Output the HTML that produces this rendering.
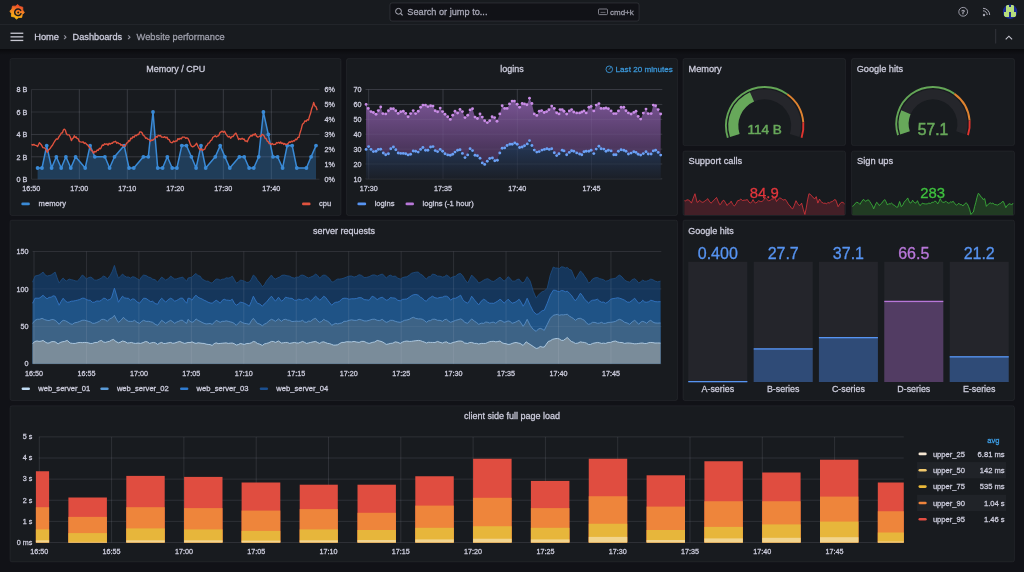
<!DOCTYPE html>
<html><head><meta charset="utf-8"><title>Website performance</title>
<style>
html,body{margin:0;padding:0;background:#111217;width:1024px;height:572px;overflow:hidden}
svg{display:block;font-family:"Liberation Sans", sans-serif;will-change:transform}
</style></head><body>
<svg width="1024" height="572" viewBox="0 0 1024 572">
<rect width="1024" height="572" fill="#111217"/>
<rect x="0" y="0" width="1024" height="49" fill="#181b1f"/>
<line x1="0" y1="24.5" x2="1024" y2="24.5" stroke="rgba(204,204,220,0.06)" stroke-width="1"/>
<defs><linearGradient id="lg" x1="0" y1="1" x2="0.3" y2="0"><stop offset="0" stop-color="#fcc60d"/><stop offset="0.45" stop-color="#f7991f"/><stop offset="1" stop-color="#f0502a"/></linearGradient></defs>
<path d="M17.83,4.54 L19.89,6.60 L22.75,7.18 L22.75,10.10 L24.36,12.53 L22.30,14.59 L21.72,17.45 L18.80,17.45 L16.37,19.06 L14.31,17.00 L11.45,16.42 L11.45,13.50 L9.84,11.07 L11.90,9.01 L12.48,6.15 L15.40,6.15 Z" fill="url(#lg)" stroke="url(#lg)" stroke-width="0.8" stroke-linejoin="round"/>
<path d="M20.70,10.41 A3.3,3.3 0 1 0 20.99,13.69" stroke="#181b1f" stroke-width="1.5" fill="none" stroke-linecap="round"/>
<circle cx="18.20" cy="12.50" r="1.0" fill="#181b1f"/>
<rect x="390" y="3" width="249" height="18" rx="2" fill="#111217" stroke="rgba(204,204,220,0.12)" stroke-width="1"/>
<circle cx="398.5" cy="11.3" r="2.9" fill="none" stroke="#b0b0bc" stroke-width="1"/>
<line x1="400.6" y1="13.4" x2="402.6" y2="15.4" stroke="#b0b0bc" stroke-width="1.1"/>
<text x="407.30" y="15.20" font-size="9.2" fill="rgba(204,204,220,0.72)" stroke="rgba(204,204,220,0.72)" stroke-width="0.28" text-anchor="start" font-weight="normal" >Search or jump to...</text>
<rect x="598.5" y="9" width="9" height="5.6" rx="1" fill="none" stroke="#9a9aa6" stroke-width="0.8"/>
<line x1="600.5" y1="12.4" x2="605.5" y2="12.4" stroke="#9a9aa6" stroke-width="0.6"/>
<text x="610.00" y="14.60" font-size="8" fill="rgba(204,204,220,0.65)" stroke="rgba(204,204,220,0.65)" stroke-width="0.28" text-anchor="start" font-weight="normal" >cmd+k</text>
<circle cx="963.2" cy="11.8" r="4.4" fill="none" stroke="#a8a8b4" stroke-width="0.9"/>
<text x="963.20" y="14.20" font-size="6" fill="#a8a8b4" stroke="#a8a8b4" stroke-width="0.28" text-anchor="middle" font-weight="bold" >?</text>
<circle cx="984" cy="15" r="1.2" fill="#a8a8b4"/>
<path d="M983,10.8 A4.2,4.2 0 0 1 987.2,15 M983,8.3 A6.7,6.7 0 0 1 989.7,15" stroke="#a8a8b4" stroke-width="1" fill="none"/>
<circle cx="1010.1" cy="11.7" r="7.2" fill="#1b2a94"/>
<clipPath id="avc"><circle cx="1010.1" cy="11.7" r="7.2"/></clipPath>
<g clip-path="url(#avc)"><rect x="1006.42" y="5.00" width="2.65" height="2.5" fill="#b5dc7c" shape-rendering="crispEdges"/><rect x="1011.33" y="5.00" width="2.65" height="2.5" fill="#b5dc7c" shape-rendering="crispEdges"/><rect x="1006.42" y="7.27" width="2.65" height="2.5" fill="#b5dc7c" shape-rendering="crispEdges"/><rect x="1008.88" y="7.27" width="2.65" height="2.5" fill="#b5dc7c" shape-rendering="crispEdges"/><rect x="1011.33" y="7.27" width="2.65" height="2.5" fill="#b5dc7c" shape-rendering="crispEdges"/><rect x="1006.42" y="9.54" width="2.65" height="2.5" fill="#b5dc7c" shape-rendering="crispEdges"/><rect x="1008.88" y="9.54" width="2.65" height="2.5" fill="#b5dc7c" shape-rendering="crispEdges"/><rect x="1011.33" y="9.54" width="2.65" height="2.5" fill="#b5dc7c" shape-rendering="crispEdges"/><rect x="1003.98" y="11.81" width="2.65" height="2.5" fill="#b5dc7c" shape-rendering="crispEdges"/><rect x="1006.42" y="11.81" width="2.65" height="2.5" fill="#b5dc7c" shape-rendering="crispEdges"/><rect x="1011.33" y="11.81" width="2.65" height="2.5" fill="#b5dc7c" shape-rendering="crispEdges"/><rect x="1013.77" y="11.81" width="2.65" height="2.5" fill="#b5dc7c" shape-rendering="crispEdges"/><rect x="1003.98" y="14.08" width="2.65" height="2.5" fill="#b5dc7c" shape-rendering="crispEdges"/><rect x="1006.42" y="14.08" width="2.65" height="2.5" fill="#b5dc7c" shape-rendering="crispEdges"/><rect x="1011.33" y="14.08" width="2.65" height="2.5" fill="#b5dc7c" shape-rendering="crispEdges"/><rect x="1013.77" y="14.08" width="2.65" height="2.5" fill="#b5dc7c" shape-rendering="crispEdges"/></g>
<rect x="10.5" y="32.60" width="12.8" height="1.3" fill="#c8c8d2"/>
<rect x="10.5" y="36.20" width="12.8" height="1.3" fill="#c8c8d2"/>
<rect x="10.5" y="39.80" width="12.8" height="1.3" fill="#c8c8d2"/>
<text x="34.20" y="40.00" font-size="9.3" fill="#ccccdc" stroke="#ccccdc" stroke-width="0.28" text-anchor="start" font-weight="normal" >Home</text>
<text x="63.60" y="40.00" font-size="9.6" fill="rgba(204,204,220,0.65)" stroke="rgba(204,204,220,0.65)" stroke-width="0.28" text-anchor="start" font-weight="normal" >›</text>
<text x="72.60" y="40.00" font-size="9.2" fill="#ccccdc" stroke="#ccccdc" stroke-width="0.28" text-anchor="start" font-weight="normal" >Dashboards</text>
<text x="127.60" y="40.00" font-size="9.6" fill="rgba(204,204,220,0.65)" stroke="rgba(204,204,220,0.65)" stroke-width="0.28" text-anchor="start" font-weight="normal" >›</text>
<text x="136.60" y="40.00" font-size="9.3" fill="rgba(204,204,220,0.65)" stroke="rgba(204,204,220,0.65)" stroke-width="0.28" text-anchor="start" font-weight="normal" >Website performance</text>
<line x1="995.7" y1="29" x2="995.7" y2="43.5" stroke="rgba(204,204,220,0.15)" stroke-width="1"/>
<path d="M1005.7,39.3 L1008.9,36.2 L1012.1,39.3" stroke="#c8c8d2" stroke-width="1.1" fill="none"/>
<defs><linearGradient id="sh" x1="0" y1="0" x2="0" y2="1"><stop offset="0" stop-color="#000" stop-opacity="0.45"/><stop offset="1" stop-color="#000" stop-opacity="0"/></linearGradient></defs>
<rect x="0" y="49" width="1024" height="6" fill="url(#sh)"/>
<rect x="10.00" y="58.50" width="331.00" height="157.00" rx="2" fill="#181b1f" stroke="rgba(204,204,220,0.06)" stroke-width="1"/>
<text x="175.70" y="71.70" font-size="9" fill="#ccccdc" stroke="#ccccdc" stroke-width="0.28" text-anchor="middle" font-weight="normal" >Memory / CPU</text>
<line x1="31.5" y1="89.60" x2="319.5" y2="89.60" stroke="rgba(204,204,220,0.12)" stroke-width="1"/>
<text x="27.30" y="92.30" font-size="7.2" fill="#ccccdc" stroke="#ccccdc" stroke-width="0.28" text-anchor="end" font-weight="normal" >8 B</text>
<line x1="31.5" y1="112.00" x2="319.5" y2="112.00" stroke="rgba(204,204,220,0.12)" stroke-width="1"/>
<text x="27.30" y="114.70" font-size="7.2" fill="#ccccdc" stroke="#ccccdc" stroke-width="0.28" text-anchor="end" font-weight="normal" >6 B</text>
<line x1="31.5" y1="134.40" x2="319.5" y2="134.40" stroke="rgba(204,204,220,0.12)" stroke-width="1"/>
<text x="27.30" y="137.10" font-size="7.2" fill="#ccccdc" stroke="#ccccdc" stroke-width="0.28" text-anchor="end" font-weight="normal" >4 B</text>
<line x1="31.5" y1="156.80" x2="319.5" y2="156.80" stroke="rgba(204,204,220,0.12)" stroke-width="1"/>
<text x="27.30" y="159.50" font-size="7.2" fill="#ccccdc" stroke="#ccccdc" stroke-width="0.28" text-anchor="end" font-weight="normal" >2 B</text>
<line x1="31.5" y1="179.20" x2="319.5" y2="179.20" stroke="rgba(204,204,220,0.12)" stroke-width="1"/>
<text x="27.30" y="181.90" font-size="7.2" fill="#ccccdc" stroke="#ccccdc" stroke-width="0.28" text-anchor="end" font-weight="normal" >0 B</text>
<text x="324.50" y="92.30" font-size="7.2" fill="#ccccdc" stroke="#ccccdc" stroke-width="0.28" text-anchor="start" font-weight="normal" >6%</text>
<text x="324.50" y="107.23" font-size="7.2" fill="#ccccdc" stroke="#ccccdc" stroke-width="0.28" text-anchor="start" font-weight="normal" >5%</text>
<text x="324.50" y="122.16" font-size="7.2" fill="#ccccdc" stroke="#ccccdc" stroke-width="0.28" text-anchor="start" font-weight="normal" >4%</text>
<text x="324.50" y="137.09" font-size="7.2" fill="#ccccdc" stroke="#ccccdc" stroke-width="0.28" text-anchor="start" font-weight="normal" >3%</text>
<text x="324.50" y="152.02" font-size="7.2" fill="#ccccdc" stroke="#ccccdc" stroke-width="0.28" text-anchor="start" font-weight="normal" >2%</text>
<text x="324.50" y="166.95" font-size="7.2" fill="#ccccdc" stroke="#ccccdc" stroke-width="0.28" text-anchor="start" font-weight="normal" >1%</text>
<text x="324.50" y="181.88" font-size="7.2" fill="#ccccdc" stroke="#ccccdc" stroke-width="0.28" text-anchor="start" font-weight="normal" >0%</text>
<text x="31.30" y="190.70" font-size="7.2" fill="#ccccdc" stroke="#ccccdc" stroke-width="0.28" text-anchor="middle" font-weight="normal" >16:50</text>
<line x1="79.30" y1="89.6" x2="79.30" y2="179.2" stroke="rgba(204,204,220,0.12)" stroke-width="1"/>
<text x="79.30" y="190.70" font-size="7.2" fill="#ccccdc" stroke="#ccccdc" stroke-width="0.28" text-anchor="middle" font-weight="normal" >17:00</text>
<line x1="127.30" y1="89.6" x2="127.30" y2="179.2" stroke="rgba(204,204,220,0.12)" stroke-width="1"/>
<text x="127.30" y="190.70" font-size="7.2" fill="#ccccdc" stroke="#ccccdc" stroke-width="0.28" text-anchor="middle" font-weight="normal" >17:10</text>
<line x1="175.30" y1="89.6" x2="175.30" y2="179.2" stroke="rgba(204,204,220,0.12)" stroke-width="1"/>
<text x="175.30" y="190.70" font-size="7.2" fill="#ccccdc" stroke="#ccccdc" stroke-width="0.28" text-anchor="middle" font-weight="normal" >17:20</text>
<line x1="223.30" y1="89.6" x2="223.30" y2="179.2" stroke="rgba(204,204,220,0.12)" stroke-width="1"/>
<text x="223.30" y="190.70" font-size="7.2" fill="#ccccdc" stroke="#ccccdc" stroke-width="0.28" text-anchor="middle" font-weight="normal" >17:30</text>
<line x1="271.30" y1="89.6" x2="271.30" y2="179.2" stroke="rgba(204,204,220,0.12)" stroke-width="1"/>
<text x="271.30" y="190.70" font-size="7.2" fill="#ccccdc" stroke="#ccccdc" stroke-width="0.28" text-anchor="middle" font-weight="normal" >17:40</text>
<line x1="31.5" y1="89.6" x2="31.5" y2="179.2" stroke="rgba(204,204,220,0.12)" stroke-width="1"/>
<path d="M37.60,168.00 L42.00,168.00 L46.70,145.60 L51.60,168.00 L56.30,156.80 L61.20,168.00 L65.90,156.80 L70.80,168.00 L75.60,156.80 L85.20,168.00 L90.10,145.60 L94.80,156.80 L104.90,156.80 L109.60,168.00 L114.50,156.80 L124.20,145.60 L129.00,168.00 L133.80,168.00 L143.40,156.80 L148.30,156.80 L153.00,112.00 L157.70,168.00 L162.60,168.00 L167.30,156.80 L172.20,168.00 L176.90,168.00 L181.80,145.60 L186.50,145.60 L191.40,156.80 L196.10,168.00 L201.00,145.60 L205.70,168.00 L215.30,156.80 L220.20,145.60 L224.90,156.80 L229.80,168.00 L239.40,156.80 L244.20,156.80 L249.10,168.00 L253.80,168.00 L258.70,156.80 L263.40,112.00 L268.30,134.40 L273.00,156.80 L277.60,156.80 L282.60,168.00 L287.20,145.60 L292.20,145.60 L296.80,168.00 L306.40,168.00 L311.10,156.80 L316.00,145.60 L316.00,179.2 L37.60,179.2 Z" fill="#2c70b2" fill-opacity="0.4"/>
<line x1="79.30" y1="89.6" x2="79.30" y2="179.2" stroke="rgba(204,204,220,0.07)" stroke-width="1"/>
<line x1="127.30" y1="89.6" x2="127.30" y2="179.2" stroke="rgba(204,204,220,0.07)" stroke-width="1"/>
<line x1="175.30" y1="89.6" x2="175.30" y2="179.2" stroke="rgba(204,204,220,0.07)" stroke-width="1"/>
<line x1="223.30" y1="89.6" x2="223.30" y2="179.2" stroke="rgba(204,204,220,0.07)" stroke-width="1"/>
<line x1="271.30" y1="89.6" x2="271.30" y2="179.2" stroke="rgba(204,204,220,0.07)" stroke-width="1"/>
<line x1="31.5" y1="134.40" x2="319.5" y2="134.40" stroke="rgba(204,204,220,0.07)" stroke-width="1"/>
<line x1="31.5" y1="156.80" x2="319.5" y2="156.80" stroke="rgba(204,204,220,0.07)" stroke-width="1"/>
<path d="M37.60,168.00 L42.00,168.00 L46.70,145.60 L51.60,168.00 L56.30,156.80 L61.20,168.00 L65.90,156.80 L70.80,168.00 L75.60,156.80 L85.20,168.00 L90.10,145.60 L94.80,156.80 L104.90,156.80 L109.60,168.00 L114.50,156.80 L124.20,145.60 L129.00,168.00 L133.80,168.00 L143.40,156.80 L148.30,156.80 L153.00,112.00 L157.70,168.00 L162.60,168.00 L167.30,156.80 L172.20,168.00 L176.90,168.00 L181.80,145.60 L186.50,145.60 L191.40,156.80 L196.10,168.00 L201.00,145.60 L205.70,168.00 L215.30,156.80 L220.20,145.60 L224.90,156.80 L229.80,168.00 L239.40,156.80 L244.20,156.80 L249.10,168.00 L253.80,168.00 L258.70,156.80 L263.40,112.00 L268.30,134.40 L273.00,156.80 L277.60,156.80 L282.60,168.00 L287.20,145.60 L292.20,145.60 L296.80,168.00 L306.40,168.00 L311.10,156.80 L316.00,145.60" fill="none" stroke="#3a8ad6" stroke-width="1.5" stroke-linejoin="round"/>
<circle cx="37.60" cy="168.00" r="1.9" fill="#3a8ad6"/>
<circle cx="42.00" cy="168.00" r="1.9" fill="#3a8ad6"/>
<circle cx="46.70" cy="145.60" r="1.9" fill="#3a8ad6"/>
<circle cx="51.60" cy="168.00" r="1.9" fill="#3a8ad6"/>
<circle cx="56.30" cy="156.80" r="1.9" fill="#3a8ad6"/>
<circle cx="61.20" cy="168.00" r="1.9" fill="#3a8ad6"/>
<circle cx="65.90" cy="156.80" r="1.9" fill="#3a8ad6"/>
<circle cx="70.80" cy="168.00" r="1.9" fill="#3a8ad6"/>
<circle cx="75.60" cy="156.80" r="1.9" fill="#3a8ad6"/>
<circle cx="85.20" cy="168.00" r="1.9" fill="#3a8ad6"/>
<circle cx="90.10" cy="145.60" r="1.9" fill="#3a8ad6"/>
<circle cx="94.80" cy="156.80" r="1.9" fill="#3a8ad6"/>
<circle cx="104.90" cy="156.80" r="1.9" fill="#3a8ad6"/>
<circle cx="109.60" cy="168.00" r="1.9" fill="#3a8ad6"/>
<circle cx="114.50" cy="156.80" r="1.9" fill="#3a8ad6"/>
<circle cx="124.20" cy="145.60" r="1.9" fill="#3a8ad6"/>
<circle cx="129.00" cy="168.00" r="1.9" fill="#3a8ad6"/>
<circle cx="133.80" cy="168.00" r="1.9" fill="#3a8ad6"/>
<circle cx="143.40" cy="156.80" r="1.9" fill="#3a8ad6"/>
<circle cx="148.30" cy="156.80" r="1.9" fill="#3a8ad6"/>
<circle cx="153.00" cy="112.00" r="1.9" fill="#3a8ad6"/>
<circle cx="157.70" cy="168.00" r="1.9" fill="#3a8ad6"/>
<circle cx="162.60" cy="168.00" r="1.9" fill="#3a8ad6"/>
<circle cx="167.30" cy="156.80" r="1.9" fill="#3a8ad6"/>
<circle cx="172.20" cy="168.00" r="1.9" fill="#3a8ad6"/>
<circle cx="176.90" cy="168.00" r="1.9" fill="#3a8ad6"/>
<circle cx="181.80" cy="145.60" r="1.9" fill="#3a8ad6"/>
<circle cx="186.50" cy="145.60" r="1.9" fill="#3a8ad6"/>
<circle cx="191.40" cy="156.80" r="1.9" fill="#3a8ad6"/>
<circle cx="196.10" cy="168.00" r="1.9" fill="#3a8ad6"/>
<circle cx="201.00" cy="145.60" r="1.9" fill="#3a8ad6"/>
<circle cx="205.70" cy="168.00" r="1.9" fill="#3a8ad6"/>
<circle cx="215.30" cy="156.80" r="1.9" fill="#3a8ad6"/>
<circle cx="220.20" cy="145.60" r="1.9" fill="#3a8ad6"/>
<circle cx="224.90" cy="156.80" r="1.9" fill="#3a8ad6"/>
<circle cx="229.80" cy="168.00" r="1.9" fill="#3a8ad6"/>
<circle cx="239.40" cy="156.80" r="1.9" fill="#3a8ad6"/>
<circle cx="244.20" cy="156.80" r="1.9" fill="#3a8ad6"/>
<circle cx="249.10" cy="168.00" r="1.9" fill="#3a8ad6"/>
<circle cx="253.80" cy="168.00" r="1.9" fill="#3a8ad6"/>
<circle cx="258.70" cy="156.80" r="1.9" fill="#3a8ad6"/>
<circle cx="263.40" cy="112.00" r="1.9" fill="#3a8ad6"/>
<circle cx="268.30" cy="134.40" r="1.9" fill="#3a8ad6"/>
<circle cx="273.00" cy="156.80" r="1.9" fill="#3a8ad6"/>
<circle cx="277.60" cy="156.80" r="1.9" fill="#3a8ad6"/>
<circle cx="282.60" cy="168.00" r="1.9" fill="#3a8ad6"/>
<circle cx="287.20" cy="145.60" r="1.9" fill="#3a8ad6"/>
<circle cx="292.20" cy="145.60" r="1.9" fill="#3a8ad6"/>
<circle cx="296.80" cy="168.00" r="1.9" fill="#3a8ad6"/>
<circle cx="306.40" cy="168.00" r="1.9" fill="#3a8ad6"/>
<circle cx="311.10" cy="156.80" r="1.9" fill="#3a8ad6"/>
<circle cx="316.00" cy="145.60" r="1.9" fill="#3a8ad6"/>
<path d="M31.50,144.40 L32.67,145.09 L33.83,144.36 L35.00,145.30 L36.30,145.40 L37.60,146.50 L39.40,142.70 L41.10,144.40 L42.90,147.60 L44.60,147.90 L45.90,149.42 L47.20,152.30 L48.55,149.85 L49.90,148.80 L51.20,146.80 L52.50,145.30 L53.80,142.74 L55.10,140.60 L56.40,139.03 L57.70,139.20 L59.00,136.59 L60.30,134.80 L61.33,132.99 L62.35,132.95 L63.38,129.95 L64.40,129.10 L65.37,130.13 L66.33,133.48 L67.30,134.80 L69.10,134.80 L70.25,136.99 L71.40,140.60 L72.37,138.65 L73.33,138.04 L74.30,135.70 L75.20,137.46 L76.10,136.81 L77.00,138.30 L78.13,138.67 L79.27,141.37 L80.40,141.80 L81.75,142.05 L83.10,141.80 L84.27,143.47 L85.43,142.86 L86.60,144.40 L87.77,145.13 L88.93,146.96 L90.10,147.90 L91.27,150.56 L92.43,150.86 L93.60,153.20 L94.77,151.36 L95.93,151.97 L97.10,150.00 L98.27,150.37 L99.43,148.26 L100.60,148.80 L102.30,145.00 L103.47,145.32 L104.63,143.76 L105.80,144.40 L106.90,143.77 L108.00,145.20 L109.10,143.27 L110.20,144.10 L111.28,143.25 L112.35,143.26 L113.42,142.00 L114.50,141.80 L115.60,141.28 L116.70,143.25 L117.80,142.45 L118.90,143.60 L119.96,143.68 L121.02,145.25 L122.08,144.65 L123.14,146.16 L124.20,146.20 L125.37,145.70 L126.53,143.20 L127.70,142.70 L128.74,140.56 L129.78,141.01 L130.82,138.10 L131.86,138.71 L132.90,136.60 L134.07,137.29 L135.23,135.26 L136.40,135.70 L137.50,134.42 L138.60,134.69 L139.70,131.88 L140.80,131.90 L142.10,132.88 L143.40,135.70 L144.50,135.92 L145.60,138.22 L146.70,137.96 L147.80,139.20 L149.10,139.38 L150.40,141.30 L151.57,139.94 L152.73,140.33 L153.90,139.20 L154.97,138.48 L156.05,136.37 L157.12,137.27 L158.20,135.30 L159.30,136.02 L160.40,135.36 L161.50,137.18 L162.60,137.10 L163.70,137.42 L164.80,136.66 L165.90,137.92 L167.00,137.10 L168.10,139.40 L169.20,139.66 L170.30,141.99 L171.40,142.70 L172.47,142.49 L173.55,141.03 L174.62,141.81 L175.70,140.90 L176.80,141.15 L177.90,138.62 L179.00,139.55 L180.10,138.30 L181.23,138.90 L182.37,137.05 L183.50,137.10 L184.60,137.14 L185.70,138.38 L186.80,137.77 L187.90,138.30 L189.07,140.58 L190.23,144.09 L191.40,146.20 L192.70,146.89 L194.00,146.20 L195.30,145.02 L196.60,143.20 L197.90,146.23 L199.20,148.80 L200.30,149.92 L201.40,148.80 L202.50,150.44 L203.60,149.70 L204.77,149.15 L205.93,146.26 L207.10,145.30 L208.27,143.17 L209.43,142.78 L210.60,140.60 L211.77,139.98 L212.93,137.26 L214.10,136.60 L215.27,135.75 L216.43,136.90 L217.60,136.00 L218.77,135.59 L219.93,132.66 L221.10,131.90 L222.27,131.16 L223.43,132.28 L224.60,131.30 L225.90,133.89 L227.20,135.70 L228.37,137.01 L229.53,136.45 L230.70,138.30 L231.87,136.52 L233.03,136.61 L234.20,134.80 L235.90,133.10 L237.25,136.09 L238.60,139.50 L239.77,138.57 L240.93,139.36 L242.10,138.30 L243.14,139.22 L244.18,139.01 L245.22,141.11 L246.26,140.85 L247.30,141.80 L248.60,138.50 L249.90,136.60 L250.96,135.43 L252.02,136.14 L253.08,134.32 L254.14,134.97 L255.20,133.60 L256.50,136.14 L257.80,137.10 L258.84,136.86 L259.88,135.93 L260.92,136.46 L261.96,134.29 L263.00,134.80 L264.03,135.87 L265.07,138.30 L266.10,138.53 L267.13,141.12 L268.17,141.64 L269.20,143.60 L270.24,143.31 L271.28,144.42 L272.32,143.40 L273.36,144.68 L274.40,144.40 L275.50,144.38 L276.60,142.53 L277.70,143.05 L278.80,142.30 L279.78,143.22 L280.75,142.04 L281.73,143.54 L282.70,142.97 L283.68,144.46 L284.65,143.48 L285.62,144.49 L286.60,144.40 L287.95,143.65 L289.30,141.80 L290.34,142.40 L291.38,141.20 L292.42,141.78 L293.46,140.69 L294.50,141.00 L295.60,139.23 L296.70,139.75 L297.80,137.42 L298.90,137.40 L300.07,132.70 L301.23,129.14 L302.40,124.30 L303.70,123.27 L305.00,120.80 L306.17,121.44 L307.33,119.71 L308.50,120.00 L309.54,116.12 L310.58,113.30 L311.62,108.88 L312.66,106.35 L313.70,102.50 L314.87,105.95 L316.03,106.83 L317.20,110.30" fill="none" stroke="#e0523e" stroke-width="1.35" stroke-linejoin="round"/>
<rect x="21.3" y="202.6" width="8.6" height="2.6" rx="1.3" fill="#3a8ad6"/>
<text x="38.60" y="206.00" font-size="7.6" fill="#ccccdc" stroke="#ccccdc" stroke-width="0.28" text-anchor="start" font-weight="normal" >memory</text>
<rect x="302" y="202.6" width="8.6" height="2.6" rx="1.3" fill="#e0523e"/>
<text x="318.90" y="206.00" font-size="7.6" fill="#ccccdc" stroke="#ccccdc" stroke-width="0.28" text-anchor="start" font-weight="normal" >cpu</text>
<rect x="346.50" y="58.50" width="331.00" height="157.00" rx="2" fill="#181b1f" stroke="rgba(204,204,220,0.06)" stroke-width="1"/>
<text x="512.00" y="71.70" font-size="9" fill="#ccccdc" stroke="#ccccdc" stroke-width="0.28" text-anchor="middle" font-weight="normal" >logins</text>
<circle cx="609.3" cy="69.3" r="3.3" fill="none" stroke="#3a96d8" stroke-width="0.9"/>
<path d="M609.1,69.4 L610.9,67.4" stroke="#3a96d8" stroke-width="0.9" fill="none" stroke-linecap="round"/>
<text x="615.60" y="71.60" font-size="8.1" fill="#3a96d8" stroke="#3a96d8" stroke-width="0.28" text-anchor="start" font-weight="normal" >Last 20 minutes</text>
<line x1="365.5" y1="89.50" x2="662.3" y2="89.50" stroke="rgba(204,204,220,0.12)" stroke-width="1"/>
<text x="361.50" y="92.20" font-size="7.2" fill="#ccccdc" stroke="#ccccdc" stroke-width="0.28" text-anchor="end" font-weight="normal" >70</text>
<line x1="365.5" y1="104.40" x2="662.3" y2="104.40" stroke="rgba(204,204,220,0.12)" stroke-width="1"/>
<text x="361.50" y="107.10" font-size="7.2" fill="#ccccdc" stroke="#ccccdc" stroke-width="0.28" text-anchor="end" font-weight="normal" >60</text>
<line x1="365.5" y1="119.30" x2="662.3" y2="119.30" stroke="rgba(204,204,220,0.12)" stroke-width="1"/>
<text x="361.50" y="122.00" font-size="7.2" fill="#ccccdc" stroke="#ccccdc" stroke-width="0.28" text-anchor="end" font-weight="normal" >50</text>
<line x1="365.5" y1="134.20" x2="662.3" y2="134.20" stroke="rgba(204,204,220,0.12)" stroke-width="1"/>
<text x="361.50" y="136.90" font-size="7.2" fill="#ccccdc" stroke="#ccccdc" stroke-width="0.28" text-anchor="end" font-weight="normal" >40</text>
<line x1="365.5" y1="149.10" x2="662.3" y2="149.10" stroke="rgba(204,204,220,0.12)" stroke-width="1"/>
<text x="361.50" y="151.80" font-size="7.2" fill="#ccccdc" stroke="#ccccdc" stroke-width="0.28" text-anchor="end" font-weight="normal" >30</text>
<line x1="365.5" y1="164.00" x2="662.3" y2="164.00" stroke="rgba(204,204,220,0.12)" stroke-width="1"/>
<text x="361.50" y="166.70" font-size="7.2" fill="#ccccdc" stroke="#ccccdc" stroke-width="0.28" text-anchor="end" font-weight="normal" >20</text>
<line x1="365.5" y1="178.90" x2="662.3" y2="178.90" stroke="rgba(204,204,220,0.12)" stroke-width="1"/>
<text x="361.50" y="181.60" font-size="7.2" fill="#ccccdc" stroke="#ccccdc" stroke-width="0.28" text-anchor="end" font-weight="normal" >10</text>
<line x1="368.70" y1="89.5" x2="368.70" y2="178.9" stroke="rgba(204,204,220,0.12)" stroke-width="1"/>
<text x="368.70" y="190.70" font-size="7.2" fill="#ccccdc" stroke="#ccccdc" stroke-width="0.28" text-anchor="middle" font-weight="normal" >17:30</text>
<line x1="443.00" y1="89.5" x2="443.00" y2="178.9" stroke="rgba(204,204,220,0.12)" stroke-width="1"/>
<text x="443.00" y="190.70" font-size="7.2" fill="#ccccdc" stroke="#ccccdc" stroke-width="0.28" text-anchor="middle" font-weight="normal" >17:35</text>
<line x1="517.30" y1="89.5" x2="517.30" y2="178.9" stroke="rgba(204,204,220,0.12)" stroke-width="1"/>
<text x="517.30" y="190.70" font-size="7.2" fill="#ccccdc" stroke="#ccccdc" stroke-width="0.28" text-anchor="middle" font-weight="normal" >17:40</text>
<line x1="591.60" y1="89.5" x2="591.60" y2="178.9" stroke="rgba(204,204,220,0.12)" stroke-width="1"/>
<text x="591.60" y="190.70" font-size="7.2" fill="#ccccdc" stroke="#ccccdc" stroke-width="0.28" text-anchor="middle" font-weight="normal" >17:45</text>
<defs><linearGradient id="pg" gradientUnits="userSpaceOnUse" x1="0" y1="98" x2="0" y2="165"><stop offset="0" stop-color="#7a5595"/><stop offset="1" stop-color="#3d2c4b"/></linearGradient><linearGradient id="bg2" gradientUnits="userSpaceOnUse" x1="0" y1="142" x2="0" y2="179"><stop offset="0" stop-color="#25395a"/><stop offset="1" stop-color="#1b1f27"/></linearGradient></defs>
<path d="M366.10,104.40 L368.30,108.40 L371.00,111.60 L373.40,112.50 L376.00,114.30 L378.30,110.60 L380.70,107.00 L382.90,113.60 L385.70,113.90 L388.40,110.80 L390.80,108.80 L393.40,108.80 L395.80,110.80 L398.20,113.40 L400.70,111.70 L403.30,111.20 L405.70,113.40 L408.10,116.70 L410.60,113.60 L413.20,110.60 L415.60,113.60 L418.20,111.20 L420.60,107.20 L422.90,105.10 L425.50,105.10 L427.90,106.60 L430.60,105.70 L433.00,106.10 L435.20,110.80 L437.60,111.70 L440.20,108.10 L442.60,111.60 L445.00,114.30 L447.70,116.70 L450.30,119.40 L452.70,115.20 L455.00,111.20 L457.60,113.00 L460.00,109.40 L462.40,111.60 L465.00,117.60 L467.70,115.20 L470.10,109.90 L472.50,108.80 L475.00,117.10 L477.40,118.50 L480.00,113.90 L482.30,117.10 L484.70,120.70 L487.30,122.60 L489.70,120.70 L492.10,116.70 L494.60,117.60 L497.00,121.30 L499.80,113.90 L502.20,105.70 L504.70,108.40 L507.10,108.40 L509.50,103.90 L512.10,101.10 L514.40,101.10 L517.20,104.20 L519.60,107.20 L522.20,103.50 L524.50,103.90 L526.90,104.80 L529.50,98.30 L531.90,103.50 L534.30,113.90 L536.80,115.40 L539.20,111.20 L541.60,110.60 L544.20,112.50 L546.60,111.60 L548.90,109.70 L551.70,106.10 L554.30,108.40 L556.70,112.70 L559.00,113.90 L560.00,109.60 L562.20,109.60 L564.00,111.30 L566.70,114.00 L569.30,110.90 L571.60,109.60 L573.80,112.00 L576.70,112.90 L579.60,112.90 L581.80,112.00 L584.00,110.90 L586.20,112.90 L588.90,107.30 L591.10,106.40 L593.80,110.90 L596.20,105.10 L598.90,103.60 L601.10,108.40 L603.80,108.40 L606.00,108.00 L608.40,108.70 L611.10,110.90 L613.80,113.60 L616.00,113.60 L618.40,110.90 L621.10,107.30 L623.80,107.30 L626.00,110.70 L628.40,112.90 L631.10,114.00 L633.80,112.40 L636.00,111.30 L638.20,116.40 L640.70,119.10 L643.30,113.10 L646.00,109.10 L648.20,113.60 L651.10,113.60 L653.30,105.10 L655.60,105.80 L658.20,109.60 L660.70,114.00 L660.70,155.10 L658.20,152.40 L655.60,150.20 L653.30,150.90 L651.10,154.00 L648.20,154.00 L646.00,151.80 L643.30,153.60 L640.70,155.10 L638.20,154.20 L636.00,152.40 L633.80,151.80 L631.10,153.10 L628.40,154.00 L626.00,151.30 L623.80,150.20 L621.10,149.80 L618.40,151.30 L616.00,154.70 L613.80,154.70 L611.10,150.90 L608.40,150.20 L606.00,151.30 L603.80,149.10 L601.10,148.70 L598.90,146.20 L596.20,149.10 L593.80,153.60 L591.10,150.20 L588.90,151.30 L586.20,151.30 L584.00,151.80 L581.80,154.70 L579.60,154.00 L576.70,152.90 L573.80,151.30 L571.60,150.70 L569.30,152.40 L566.70,154.70 L564.00,150.90 L562.20,150.20 L559.00,153.80 L556.70,155.60 L554.30,152.80 L551.70,148.80 L549.30,149.40 L546.90,148.80 L544.40,149.40 L542.00,150.10 L539.20,151.60 L536.80,152.10 L534.30,150.10 L531.90,145.50 L529.50,140.60 L527.30,143.90 L524.50,145.70 L522.20,147.00 L519.60,147.50 L517.20,144.20 L514.80,142.90 L512.20,144.20 L509.90,144.20 L507.10,145.50 L504.70,147.90 L502.20,148.30 L499.80,153.00 L497.40,160.20 L494.80,160.70 L492.40,158.00 L489.70,158.50 L487.30,161.30 L484.70,164.40 L482.30,162.90 L480.00,158.30 L477.40,155.80 L475.00,155.20 L472.50,150.60 L470.10,148.80 L467.70,154.90 L465.00,157.60 L462.40,153.40 L460.00,149.70 L457.60,150.30 L455.00,152.10 L452.70,154.30 L450.30,155.20 L447.70,154.90 L445.00,153.80 L442.60,151.20 L440.20,149.40 L437.60,151.60 L435.20,150.60 L433.00,146.60 L430.60,147.00 L427.90,150.30 L425.50,150.30 L422.90,147.50 L420.60,149.40 L418.20,152.10 L415.60,151.20 L413.20,151.00 L410.60,154.30 L408.10,154.90 L405.70,153.80 L403.30,153.40 L400.70,153.40 L398.20,153.00 L395.80,149.70 L393.40,147.00 L390.80,148.80 L388.40,153.80 L385.70,154.70 L383.30,153.00 L380.70,149.20 L378.30,149.40 L376.00,151.20 L373.40,151.60 L371.00,149.40 L368.60,146.60 L366.10,149.40 Z" fill="url(#pg)"/>
<path d="M366.10,149.40 L368.60,146.60 L371.00,149.40 L373.40,151.60 L376.00,151.20 L378.30,149.40 L380.70,149.20 L383.30,153.00 L385.70,154.70 L388.40,153.80 L390.80,148.80 L393.40,147.00 L395.80,149.70 L398.20,153.00 L400.70,153.40 L403.30,153.40 L405.70,153.80 L408.10,154.90 L410.60,154.30 L413.20,151.00 L415.60,151.20 L418.20,152.10 L420.60,149.40 L422.90,147.50 L425.50,150.30 L427.90,150.30 L430.60,147.00 L433.00,146.60 L435.20,150.60 L437.60,151.60 L440.20,149.40 L442.60,151.20 L445.00,153.80 L447.70,154.90 L450.30,155.20 L452.70,154.30 L455.00,152.10 L457.60,150.30 L460.00,149.70 L462.40,153.40 L465.00,157.60 L467.70,154.90 L470.10,148.80 L472.50,150.60 L475.00,155.20 L477.40,155.80 L480.00,158.30 L482.30,162.90 L484.70,164.40 L487.30,161.30 L489.70,158.50 L492.40,158.00 L494.80,160.70 L497.40,160.20 L499.80,153.00 L502.20,148.30 L504.70,147.90 L507.10,145.50 L509.90,144.20 L512.20,144.20 L514.80,142.90 L517.20,144.20 L519.60,147.50 L522.20,147.00 L524.50,145.70 L527.30,143.90 L529.50,140.60 L531.90,145.50 L534.30,150.10 L536.80,152.10 L539.20,151.60 L542.00,150.10 L544.40,149.40 L546.90,148.80 L549.30,149.40 L551.70,148.80 L554.30,152.80 L556.70,155.60 L559.00,153.80 L562.20,150.20 L564.00,150.90 L566.70,154.70 L569.30,152.40 L571.60,150.70 L573.80,151.30 L576.70,152.90 L579.60,154.00 L581.80,154.70 L584.00,151.80 L586.20,151.30 L588.90,151.30 L591.10,150.20 L593.80,153.60 L596.20,149.10 L598.90,146.20 L601.10,148.70 L603.80,149.10 L606.00,151.30 L608.40,150.20 L611.10,150.90 L613.80,154.70 L616.00,154.70 L618.40,151.30 L621.10,149.80 L623.80,150.20 L626.00,151.30 L628.40,154.00 L631.10,153.10 L633.80,151.80 L636.00,152.40 L638.20,154.20 L640.70,155.10 L643.30,153.60 L646.00,151.80 L648.20,154.00 L651.10,154.00 L653.30,150.90 L655.60,150.20 L658.20,152.40 L660.70,155.10 L660.70,178.9 L366.10,178.9 Z" fill="url(#bg2)"/>
<line x1="365.5" y1="89.50" x2="662.3" y2="89.50" stroke="rgba(204,204,220,0.07)" stroke-width="1"/>
<line x1="365.5" y1="104.40" x2="662.3" y2="104.40" stroke="rgba(204,204,220,0.07)" stroke-width="1"/>
<line x1="365.5" y1="119.30" x2="662.3" y2="119.30" stroke="rgba(204,204,220,0.07)" stroke-width="1"/>
<line x1="365.5" y1="134.20" x2="662.3" y2="134.20" stroke="rgba(204,204,220,0.07)" stroke-width="1"/>
<line x1="365.5" y1="149.10" x2="662.3" y2="149.10" stroke="rgba(204,204,220,0.07)" stroke-width="1"/>
<line x1="365.5" y1="164.00" x2="662.3" y2="164.00" stroke="rgba(204,204,220,0.07)" stroke-width="1"/>
<line x1="365.5" y1="178.90" x2="662.3" y2="178.90" stroke="rgba(204,204,220,0.07)" stroke-width="1"/>
<line x1="368.70" y1="89.5" x2="368.70" y2="178.9" stroke="rgba(204,204,220,0.07)" stroke-width="1"/>
<line x1="443.00" y1="89.5" x2="443.00" y2="178.9" stroke="rgba(204,204,220,0.07)" stroke-width="1"/>
<line x1="517.30" y1="89.5" x2="517.30" y2="178.9" stroke="rgba(204,204,220,0.07)" stroke-width="1"/>
<line x1="591.60" y1="89.5" x2="591.60" y2="178.9" stroke="rgba(204,204,220,0.07)" stroke-width="1"/>
<circle cx="366.10" cy="104.40" r="1.45" fill="#c98ce6"/>
<circle cx="368.30" cy="108.40" r="1.45" fill="#c98ce6"/>
<circle cx="371.00" cy="111.60" r="1.45" fill="#c98ce6"/>
<circle cx="373.40" cy="112.50" r="1.45" fill="#c98ce6"/>
<circle cx="376.00" cy="114.30" r="1.45" fill="#c98ce6"/>
<circle cx="378.30" cy="110.60" r="1.45" fill="#c98ce6"/>
<circle cx="380.70" cy="107.00" r="1.45" fill="#c98ce6"/>
<circle cx="382.90" cy="113.60" r="1.45" fill="#c98ce6"/>
<circle cx="385.70" cy="113.90" r="1.45" fill="#c98ce6"/>
<circle cx="388.40" cy="110.80" r="1.45" fill="#c98ce6"/>
<circle cx="390.80" cy="108.80" r="1.45" fill="#c98ce6"/>
<circle cx="393.40" cy="108.80" r="1.45" fill="#c98ce6"/>
<circle cx="395.80" cy="110.80" r="1.45" fill="#c98ce6"/>
<circle cx="398.20" cy="113.40" r="1.45" fill="#c98ce6"/>
<circle cx="400.70" cy="111.70" r="1.45" fill="#c98ce6"/>
<circle cx="403.30" cy="111.20" r="1.45" fill="#c98ce6"/>
<circle cx="405.70" cy="113.40" r="1.45" fill="#c98ce6"/>
<circle cx="408.10" cy="116.70" r="1.45" fill="#c98ce6"/>
<circle cx="410.60" cy="113.60" r="1.45" fill="#c98ce6"/>
<circle cx="413.20" cy="110.60" r="1.45" fill="#c98ce6"/>
<circle cx="415.60" cy="113.60" r="1.45" fill="#c98ce6"/>
<circle cx="418.20" cy="111.20" r="1.45" fill="#c98ce6"/>
<circle cx="420.60" cy="107.20" r="1.45" fill="#c98ce6"/>
<circle cx="422.90" cy="105.10" r="1.45" fill="#c98ce6"/>
<circle cx="425.50" cy="105.10" r="1.45" fill="#c98ce6"/>
<circle cx="427.90" cy="106.60" r="1.45" fill="#c98ce6"/>
<circle cx="430.60" cy="105.70" r="1.45" fill="#c98ce6"/>
<circle cx="433.00" cy="106.10" r="1.45" fill="#c98ce6"/>
<circle cx="435.20" cy="110.80" r="1.45" fill="#c98ce6"/>
<circle cx="437.60" cy="111.70" r="1.45" fill="#c98ce6"/>
<circle cx="440.20" cy="108.10" r="1.45" fill="#c98ce6"/>
<circle cx="442.60" cy="111.60" r="1.45" fill="#c98ce6"/>
<circle cx="445.00" cy="114.30" r="1.45" fill="#c98ce6"/>
<circle cx="447.70" cy="116.70" r="1.45" fill="#c98ce6"/>
<circle cx="450.30" cy="119.40" r="1.45" fill="#c98ce6"/>
<circle cx="452.70" cy="115.20" r="1.45" fill="#c98ce6"/>
<circle cx="455.00" cy="111.20" r="1.45" fill="#c98ce6"/>
<circle cx="457.60" cy="113.00" r="1.45" fill="#c98ce6"/>
<circle cx="460.00" cy="109.40" r="1.45" fill="#c98ce6"/>
<circle cx="462.40" cy="111.60" r="1.45" fill="#c98ce6"/>
<circle cx="465.00" cy="117.60" r="1.45" fill="#c98ce6"/>
<circle cx="467.70" cy="115.20" r="1.45" fill="#c98ce6"/>
<circle cx="470.10" cy="109.90" r="1.45" fill="#c98ce6"/>
<circle cx="472.50" cy="108.80" r="1.45" fill="#c98ce6"/>
<circle cx="475.00" cy="117.10" r="1.45" fill="#c98ce6"/>
<circle cx="477.40" cy="118.50" r="1.45" fill="#c98ce6"/>
<circle cx="480.00" cy="113.90" r="1.45" fill="#c98ce6"/>
<circle cx="482.30" cy="117.10" r="1.45" fill="#c98ce6"/>
<circle cx="484.70" cy="120.70" r="1.45" fill="#c98ce6"/>
<circle cx="487.30" cy="122.60" r="1.45" fill="#c98ce6"/>
<circle cx="489.70" cy="120.70" r="1.45" fill="#c98ce6"/>
<circle cx="492.10" cy="116.70" r="1.45" fill="#c98ce6"/>
<circle cx="494.60" cy="117.60" r="1.45" fill="#c98ce6"/>
<circle cx="497.00" cy="121.30" r="1.45" fill="#c98ce6"/>
<circle cx="499.80" cy="113.90" r="1.45" fill="#c98ce6"/>
<circle cx="502.20" cy="105.70" r="1.45" fill="#c98ce6"/>
<circle cx="504.70" cy="108.40" r="1.45" fill="#c98ce6"/>
<circle cx="507.10" cy="108.40" r="1.45" fill="#c98ce6"/>
<circle cx="509.50" cy="103.90" r="1.45" fill="#c98ce6"/>
<circle cx="512.10" cy="101.10" r="1.45" fill="#c98ce6"/>
<circle cx="514.40" cy="101.10" r="1.45" fill="#c98ce6"/>
<circle cx="517.20" cy="104.20" r="1.45" fill="#c98ce6"/>
<circle cx="519.60" cy="107.20" r="1.45" fill="#c98ce6"/>
<circle cx="522.20" cy="103.50" r="1.45" fill="#c98ce6"/>
<circle cx="524.50" cy="103.90" r="1.45" fill="#c98ce6"/>
<circle cx="526.90" cy="104.80" r="1.45" fill="#c98ce6"/>
<circle cx="529.50" cy="98.30" r="1.45" fill="#c98ce6"/>
<circle cx="531.90" cy="103.50" r="1.45" fill="#c98ce6"/>
<circle cx="534.30" cy="113.90" r="1.45" fill="#c98ce6"/>
<circle cx="536.80" cy="115.40" r="1.45" fill="#c98ce6"/>
<circle cx="539.20" cy="111.20" r="1.45" fill="#c98ce6"/>
<circle cx="541.60" cy="110.60" r="1.45" fill="#c98ce6"/>
<circle cx="544.20" cy="112.50" r="1.45" fill="#c98ce6"/>
<circle cx="546.60" cy="111.60" r="1.45" fill="#c98ce6"/>
<circle cx="548.90" cy="109.70" r="1.45" fill="#c98ce6"/>
<circle cx="551.70" cy="106.10" r="1.45" fill="#c98ce6"/>
<circle cx="554.30" cy="108.40" r="1.45" fill="#c98ce6"/>
<circle cx="556.70" cy="112.70" r="1.45" fill="#c98ce6"/>
<circle cx="559.00" cy="113.90" r="1.45" fill="#c98ce6"/>
<circle cx="560.00" cy="109.60" r="1.45" fill="#c98ce6"/>
<circle cx="562.20" cy="109.60" r="1.45" fill="#c98ce6"/>
<circle cx="564.00" cy="111.30" r="1.45" fill="#c98ce6"/>
<circle cx="566.70" cy="114.00" r="1.45" fill="#c98ce6"/>
<circle cx="569.30" cy="110.90" r="1.45" fill="#c98ce6"/>
<circle cx="571.60" cy="109.60" r="1.45" fill="#c98ce6"/>
<circle cx="573.80" cy="112.00" r="1.45" fill="#c98ce6"/>
<circle cx="576.70" cy="112.90" r="1.45" fill="#c98ce6"/>
<circle cx="579.60" cy="112.90" r="1.45" fill="#c98ce6"/>
<circle cx="581.80" cy="112.00" r="1.45" fill="#c98ce6"/>
<circle cx="584.00" cy="110.90" r="1.45" fill="#c98ce6"/>
<circle cx="586.20" cy="112.90" r="1.45" fill="#c98ce6"/>
<circle cx="588.90" cy="107.30" r="1.45" fill="#c98ce6"/>
<circle cx="591.10" cy="106.40" r="1.45" fill="#c98ce6"/>
<circle cx="593.80" cy="110.90" r="1.45" fill="#c98ce6"/>
<circle cx="596.20" cy="105.10" r="1.45" fill="#c98ce6"/>
<circle cx="598.90" cy="103.60" r="1.45" fill="#c98ce6"/>
<circle cx="601.10" cy="108.40" r="1.45" fill="#c98ce6"/>
<circle cx="603.80" cy="108.40" r="1.45" fill="#c98ce6"/>
<circle cx="606.00" cy="108.00" r="1.45" fill="#c98ce6"/>
<circle cx="608.40" cy="108.70" r="1.45" fill="#c98ce6"/>
<circle cx="611.10" cy="110.90" r="1.45" fill="#c98ce6"/>
<circle cx="613.80" cy="113.60" r="1.45" fill="#c98ce6"/>
<circle cx="616.00" cy="113.60" r="1.45" fill="#c98ce6"/>
<circle cx="618.40" cy="110.90" r="1.45" fill="#c98ce6"/>
<circle cx="621.10" cy="107.30" r="1.45" fill="#c98ce6"/>
<circle cx="623.80" cy="107.30" r="1.45" fill="#c98ce6"/>
<circle cx="626.00" cy="110.70" r="1.45" fill="#c98ce6"/>
<circle cx="628.40" cy="112.90" r="1.45" fill="#c98ce6"/>
<circle cx="631.10" cy="114.00" r="1.45" fill="#c98ce6"/>
<circle cx="633.80" cy="112.40" r="1.45" fill="#c98ce6"/>
<circle cx="636.00" cy="111.30" r="1.45" fill="#c98ce6"/>
<circle cx="638.20" cy="116.40" r="1.45" fill="#c98ce6"/>
<circle cx="640.70" cy="119.10" r="1.45" fill="#c98ce6"/>
<circle cx="643.30" cy="113.10" r="1.45" fill="#c98ce6"/>
<circle cx="646.00" cy="109.10" r="1.45" fill="#c98ce6"/>
<circle cx="648.20" cy="113.60" r="1.45" fill="#c98ce6"/>
<circle cx="651.10" cy="113.60" r="1.45" fill="#c98ce6"/>
<circle cx="653.30" cy="105.10" r="1.45" fill="#c98ce6"/>
<circle cx="655.60" cy="105.80" r="1.45" fill="#c98ce6"/>
<circle cx="658.20" cy="109.60" r="1.45" fill="#c98ce6"/>
<circle cx="660.70" cy="114.00" r="1.45" fill="#c98ce6"/>
<circle cx="366.10" cy="149.40" r="1.45" fill="#6aa0f5"/>
<circle cx="368.60" cy="146.60" r="1.45" fill="#6aa0f5"/>
<circle cx="371.00" cy="149.40" r="1.45" fill="#6aa0f5"/>
<circle cx="373.40" cy="151.60" r="1.45" fill="#6aa0f5"/>
<circle cx="376.00" cy="151.20" r="1.45" fill="#6aa0f5"/>
<circle cx="378.30" cy="149.40" r="1.45" fill="#6aa0f5"/>
<circle cx="380.70" cy="149.20" r="1.45" fill="#6aa0f5"/>
<circle cx="383.30" cy="153.00" r="1.45" fill="#6aa0f5"/>
<circle cx="385.70" cy="154.70" r="1.45" fill="#6aa0f5"/>
<circle cx="388.40" cy="153.80" r="1.45" fill="#6aa0f5"/>
<circle cx="390.80" cy="148.80" r="1.45" fill="#6aa0f5"/>
<circle cx="393.40" cy="147.00" r="1.45" fill="#6aa0f5"/>
<circle cx="395.80" cy="149.70" r="1.45" fill="#6aa0f5"/>
<circle cx="398.20" cy="153.00" r="1.45" fill="#6aa0f5"/>
<circle cx="400.70" cy="153.40" r="1.45" fill="#6aa0f5"/>
<circle cx="403.30" cy="153.40" r="1.45" fill="#6aa0f5"/>
<circle cx="405.70" cy="153.80" r="1.45" fill="#6aa0f5"/>
<circle cx="408.10" cy="154.90" r="1.45" fill="#6aa0f5"/>
<circle cx="410.60" cy="154.30" r="1.45" fill="#6aa0f5"/>
<circle cx="413.20" cy="151.00" r="1.45" fill="#6aa0f5"/>
<circle cx="415.60" cy="151.20" r="1.45" fill="#6aa0f5"/>
<circle cx="418.20" cy="152.10" r="1.45" fill="#6aa0f5"/>
<circle cx="420.60" cy="149.40" r="1.45" fill="#6aa0f5"/>
<circle cx="422.90" cy="147.50" r="1.45" fill="#6aa0f5"/>
<circle cx="425.50" cy="150.30" r="1.45" fill="#6aa0f5"/>
<circle cx="427.90" cy="150.30" r="1.45" fill="#6aa0f5"/>
<circle cx="430.60" cy="147.00" r="1.45" fill="#6aa0f5"/>
<circle cx="433.00" cy="146.60" r="1.45" fill="#6aa0f5"/>
<circle cx="435.20" cy="150.60" r="1.45" fill="#6aa0f5"/>
<circle cx="437.60" cy="151.60" r="1.45" fill="#6aa0f5"/>
<circle cx="440.20" cy="149.40" r="1.45" fill="#6aa0f5"/>
<circle cx="442.60" cy="151.20" r="1.45" fill="#6aa0f5"/>
<circle cx="445.00" cy="153.80" r="1.45" fill="#6aa0f5"/>
<circle cx="447.70" cy="154.90" r="1.45" fill="#6aa0f5"/>
<circle cx="450.30" cy="155.20" r="1.45" fill="#6aa0f5"/>
<circle cx="452.70" cy="154.30" r="1.45" fill="#6aa0f5"/>
<circle cx="455.00" cy="152.10" r="1.45" fill="#6aa0f5"/>
<circle cx="457.60" cy="150.30" r="1.45" fill="#6aa0f5"/>
<circle cx="460.00" cy="149.70" r="1.45" fill="#6aa0f5"/>
<circle cx="462.40" cy="153.40" r="1.45" fill="#6aa0f5"/>
<circle cx="465.00" cy="157.60" r="1.45" fill="#6aa0f5"/>
<circle cx="467.70" cy="154.90" r="1.45" fill="#6aa0f5"/>
<circle cx="470.10" cy="148.80" r="1.45" fill="#6aa0f5"/>
<circle cx="472.50" cy="150.60" r="1.45" fill="#6aa0f5"/>
<circle cx="475.00" cy="155.20" r="1.45" fill="#6aa0f5"/>
<circle cx="477.40" cy="155.80" r="1.45" fill="#6aa0f5"/>
<circle cx="480.00" cy="158.30" r="1.45" fill="#6aa0f5"/>
<circle cx="482.30" cy="162.90" r="1.45" fill="#6aa0f5"/>
<circle cx="484.70" cy="164.40" r="1.45" fill="#6aa0f5"/>
<circle cx="487.30" cy="161.30" r="1.45" fill="#6aa0f5"/>
<circle cx="489.70" cy="158.50" r="1.45" fill="#6aa0f5"/>
<circle cx="492.40" cy="158.00" r="1.45" fill="#6aa0f5"/>
<circle cx="494.80" cy="160.70" r="1.45" fill="#6aa0f5"/>
<circle cx="497.40" cy="160.20" r="1.45" fill="#6aa0f5"/>
<circle cx="499.80" cy="153.00" r="1.45" fill="#6aa0f5"/>
<circle cx="502.20" cy="148.30" r="1.45" fill="#6aa0f5"/>
<circle cx="504.70" cy="147.90" r="1.45" fill="#6aa0f5"/>
<circle cx="507.10" cy="145.50" r="1.45" fill="#6aa0f5"/>
<circle cx="509.90" cy="144.20" r="1.45" fill="#6aa0f5"/>
<circle cx="512.20" cy="144.20" r="1.45" fill="#6aa0f5"/>
<circle cx="514.80" cy="142.90" r="1.45" fill="#6aa0f5"/>
<circle cx="517.20" cy="144.20" r="1.45" fill="#6aa0f5"/>
<circle cx="519.60" cy="147.50" r="1.45" fill="#6aa0f5"/>
<circle cx="522.20" cy="147.00" r="1.45" fill="#6aa0f5"/>
<circle cx="524.50" cy="145.70" r="1.45" fill="#6aa0f5"/>
<circle cx="527.30" cy="143.90" r="1.45" fill="#6aa0f5"/>
<circle cx="529.50" cy="140.60" r="1.45" fill="#6aa0f5"/>
<circle cx="531.90" cy="145.50" r="1.45" fill="#6aa0f5"/>
<circle cx="534.30" cy="150.10" r="1.45" fill="#6aa0f5"/>
<circle cx="536.80" cy="152.10" r="1.45" fill="#6aa0f5"/>
<circle cx="539.20" cy="151.60" r="1.45" fill="#6aa0f5"/>
<circle cx="542.00" cy="150.10" r="1.45" fill="#6aa0f5"/>
<circle cx="544.40" cy="149.40" r="1.45" fill="#6aa0f5"/>
<circle cx="546.90" cy="148.80" r="1.45" fill="#6aa0f5"/>
<circle cx="549.30" cy="149.40" r="1.45" fill="#6aa0f5"/>
<circle cx="551.70" cy="148.80" r="1.45" fill="#6aa0f5"/>
<circle cx="554.30" cy="152.80" r="1.45" fill="#6aa0f5"/>
<circle cx="556.70" cy="155.60" r="1.45" fill="#6aa0f5"/>
<circle cx="559.00" cy="153.80" r="1.45" fill="#6aa0f5"/>
<circle cx="562.20" cy="150.20" r="1.45" fill="#6aa0f5"/>
<circle cx="564.00" cy="150.90" r="1.45" fill="#6aa0f5"/>
<circle cx="566.70" cy="154.70" r="1.45" fill="#6aa0f5"/>
<circle cx="569.30" cy="152.40" r="1.45" fill="#6aa0f5"/>
<circle cx="571.60" cy="150.70" r="1.45" fill="#6aa0f5"/>
<circle cx="573.80" cy="151.30" r="1.45" fill="#6aa0f5"/>
<circle cx="576.70" cy="152.90" r="1.45" fill="#6aa0f5"/>
<circle cx="579.60" cy="154.00" r="1.45" fill="#6aa0f5"/>
<circle cx="581.80" cy="154.70" r="1.45" fill="#6aa0f5"/>
<circle cx="584.00" cy="151.80" r="1.45" fill="#6aa0f5"/>
<circle cx="586.20" cy="151.30" r="1.45" fill="#6aa0f5"/>
<circle cx="588.90" cy="151.30" r="1.45" fill="#6aa0f5"/>
<circle cx="591.10" cy="150.20" r="1.45" fill="#6aa0f5"/>
<circle cx="593.80" cy="153.60" r="1.45" fill="#6aa0f5"/>
<circle cx="596.20" cy="149.10" r="1.45" fill="#6aa0f5"/>
<circle cx="598.90" cy="146.20" r="1.45" fill="#6aa0f5"/>
<circle cx="601.10" cy="148.70" r="1.45" fill="#6aa0f5"/>
<circle cx="603.80" cy="149.10" r="1.45" fill="#6aa0f5"/>
<circle cx="606.00" cy="151.30" r="1.45" fill="#6aa0f5"/>
<circle cx="608.40" cy="150.20" r="1.45" fill="#6aa0f5"/>
<circle cx="611.10" cy="150.90" r="1.45" fill="#6aa0f5"/>
<circle cx="613.80" cy="154.70" r="1.45" fill="#6aa0f5"/>
<circle cx="616.00" cy="154.70" r="1.45" fill="#6aa0f5"/>
<circle cx="618.40" cy="151.30" r="1.45" fill="#6aa0f5"/>
<circle cx="621.10" cy="149.80" r="1.45" fill="#6aa0f5"/>
<circle cx="623.80" cy="150.20" r="1.45" fill="#6aa0f5"/>
<circle cx="626.00" cy="151.30" r="1.45" fill="#6aa0f5"/>
<circle cx="628.40" cy="154.00" r="1.45" fill="#6aa0f5"/>
<circle cx="631.10" cy="153.10" r="1.45" fill="#6aa0f5"/>
<circle cx="633.80" cy="151.80" r="1.45" fill="#6aa0f5"/>
<circle cx="636.00" cy="152.40" r="1.45" fill="#6aa0f5"/>
<circle cx="638.20" cy="154.20" r="1.45" fill="#6aa0f5"/>
<circle cx="640.70" cy="155.10" r="1.45" fill="#6aa0f5"/>
<circle cx="643.30" cy="153.60" r="1.45" fill="#6aa0f5"/>
<circle cx="646.00" cy="151.80" r="1.45" fill="#6aa0f5"/>
<circle cx="648.20" cy="154.00" r="1.45" fill="#6aa0f5"/>
<circle cx="651.10" cy="154.00" r="1.45" fill="#6aa0f5"/>
<circle cx="653.30" cy="150.90" r="1.45" fill="#6aa0f5"/>
<circle cx="655.60" cy="150.20" r="1.45" fill="#6aa0f5"/>
<circle cx="658.20" cy="152.40" r="1.45" fill="#6aa0f5"/>
<circle cx="660.70" cy="155.10" r="1.45" fill="#6aa0f5"/>
<rect x="357.4" y="202.6" width="8.8" height="2.6" rx="1.3" fill="#5794f2"/>
<text x="374.70" y="205.90" font-size="7.6" fill="#ccccdc" stroke="#ccccdc" stroke-width="0.28" text-anchor="start" font-weight="normal" >logins</text>
<rect x="405.5" y="202.6" width="8.5" height="2.6" rx="1.3" fill="#b877d9"/>
<text x="422.60" y="205.90" font-size="7.6" fill="#ccccdc" stroke="#ccccdc" stroke-width="0.28" text-anchor="start" font-weight="normal" >logins (-1 hour)</text>
<rect x="683.00" y="58.50" width="162.50" height="87.10" rx="2" fill="#181b1f" stroke="rgba(204,204,220,0.06)" stroke-width="1"/>
<text x="688.50" y="72.00" font-size="9.2" fill="#ccccdc" stroke="#ccccdc" stroke-width="0.28" text-anchor="start" font-weight="normal" >Memory</text>
<path d="M729.99,137.03 A36.5,36.5 0 1 1 799.41,137.03 L789.81,133.91 A26.4,26.4 0 1 0 739.59,133.91 Z" fill="#25262b"/>
<path d="M729.99,137.03 A36.5,36.5 0 0 1 749.99,92.34 L754.06,101.59 A26.4,26.4 0 0 0 739.59,133.91 Z" fill="#67a85a"/>
<path d="M726.94,138.02 A39.7,39.7 0 0 1 787.83,93.49 L786.73,95.03 A37.800000000000004,37.800000000000004 0 0 0 728.75,137.43 Z" fill="#64a657"/>
<path d="M787.83,93.49 A39.7,39.7 0 0 1 804.24,122.21 L802.35,122.38 A37.800000000000004,37.800000000000004 0 0 0 786.73,95.03 Z" fill="#df8330"/>
<path d="M804.24,122.21 A39.7,39.7 0 0 1 802.46,138.02 L800.65,137.43 A37.800000000000004,37.800000000000004 0 0 0 802.35,122.38 Z" fill="#e0342f"/>
<text x="764.70" y="134.00" font-size="13.5" fill="#67a85a" stroke="#67a85a" stroke-width="0.55" text-anchor="middle" font-weight="normal" >114 B</text>
<rect x="851.50" y="58.50" width="163.00" height="87.10" rx="2" fill="#181b1f" stroke="rgba(204,204,220,0.06)" stroke-width="1"/>
<text x="856.70" y="72.00" font-size="9.2" fill="#ccccdc" stroke="#ccccdc" stroke-width="0.28" text-anchor="start" font-weight="normal" >Google hits</text>
<path d="M900.19,134.41 A34.5,34.5 0 1 1 965.81,134.41 L956.21,131.29 A24.4,24.4 0 1 0 909.79,131.29 Z" fill="#25262b"/>
<path d="M900.19,134.41 A34.5,34.5 0 0 1 901.25,110.25 L910.55,114.20 A24.4,24.4 0 0 0 909.79,131.29 Z" fill="#67a85a"/>
<path d="M897.15,135.40 A37.7,37.7 0 0 1 954.97,93.11 L953.86,94.66 A35.800000000000004,35.800000000000004 0 0 0 898.95,134.81 Z" fill="#64a657"/>
<path d="M954.97,93.11 A37.7,37.7 0 0 1 970.55,120.39 L968.66,120.56 A35.800000000000004,35.800000000000004 0 0 0 953.86,94.66 Z" fill="#df8330"/>
<path d="M970.55,120.39 A37.7,37.7 0 0 1 968.85,135.40 L967.05,134.81 A35.800000000000004,35.800000000000004 0 0 0 968.66,120.56 Z" fill="#e0342f"/>
<text x="933.00" y="134.80" font-size="15.6" fill="#67a85a" stroke="#67a85a" stroke-width="0.55" text-anchor="middle" font-weight="normal" >57.1</text>
<rect x="683.00" y="151.00" width="162.50" height="64.50" rx="2" fill="#181b1f" stroke="rgba(204,204,220,0.06)" stroke-width="1"/>
<text x="688.50" y="164.20" font-size="9.3" fill="#ccccdc" stroke="#ccccdc" stroke-width="0.28" text-anchor="start" font-weight="normal" >Support calls</text>
<path d="M684.45,200.68 L685.69,200.83 L686.93,199.85 L688.17,199.87 L689.79,200.84 L691.42,203.11 L693.20,198.18 L694.98,193.71 L697.09,202.30 L698.30,201.82 L699.52,200.20 L701.14,201.69 L702.76,202.30 L703.98,201.72 L705.19,200.68 L706.41,200.17 L707.63,198.58 L709.25,201.05 L710.87,203.11 L712.08,202.39 L713.30,200.68 L714.92,199.29 L716.54,197.44 L718.16,201.33 L719.78,204.74 L721.13,203.71 L722.48,200.93 L723.84,200.20 L725.46,202.60 L727.08,205.55 L728.43,203.75 L729.78,203.26 L731.13,201.17 L732.75,204.46 L734.37,206.03 L735.99,203.95 L737.61,200.68 L739.24,200.34 L740.86,199.06 L742.48,200.51 L744.10,200.20 L745.72,200.09 L747.34,199.55 L748.96,202.13 L750.58,203.11 L751.80,201.72 L753.01,199.55 L754.23,201.62 L755.45,203.11 L757.07,202.16 L758.69,200.68 L760.31,201.49 L761.93,201.49 L763.55,200.23 L765.17,197.44 L766.79,199.37 L768.41,200.68 L770.03,200.47 L771.66,199.06 L773.28,198.89 L774.90,197.44 L776.52,201.49 L778.14,199.26 L779.76,197.93 L781.38,198.49 L783.00,200.20 L784.22,199.65 L785.43,199.55 L787.06,201.92 L788.68,204.74 L790.03,205.76 L791.38,208.11 L792.73,208.79 L794.35,205.22 L795.97,200.68 L797.59,203.52 L799.21,205.55 L800.43,204.93 L801.64,203.11 L803.27,209.29 L804.89,214.46 L806.24,207.94 L807.59,199.88 L808.94,193.71 L810.56,194.49 L812.18,196.63 L813.40,197.49 L814.61,199.06 L816.23,196.63 L817.85,203.11 L819.48,199.06 L820.69,201.28 L821.91,202.30 L823.53,203.27 L825.15,203.11 L826.50,203.92 L827.85,202.41 L829.20,203.11 L830.82,201.92 L832.44,201.49 L834.06,199.80 L835.69,199.87 L836.90,203.01 L838.12,206.68 L839.74,204.01 L841.36,202.30 L842.98,202.39 L844.60,203.92 L844.60,215.1 L684.45,215.1 Z" fill="rgba(224,47,68,0.22)"/>
<path d="M684.45,200.68 L685.69,200.83 L686.93,199.85 L688.17,199.87 L689.79,200.84 L691.42,203.11 L693.20,198.18 L694.98,193.71 L697.09,202.30 L698.30,201.82 L699.52,200.20 L701.14,201.69 L702.76,202.30 L703.98,201.72 L705.19,200.68 L706.41,200.17 L707.63,198.58 L709.25,201.05 L710.87,203.11 L712.08,202.39 L713.30,200.68 L714.92,199.29 L716.54,197.44 L718.16,201.33 L719.78,204.74 L721.13,203.71 L722.48,200.93 L723.84,200.20 L725.46,202.60 L727.08,205.55 L728.43,203.75 L729.78,203.26 L731.13,201.17 L732.75,204.46 L734.37,206.03 L735.99,203.95 L737.61,200.68 L739.24,200.34 L740.86,199.06 L742.48,200.51 L744.10,200.20 L745.72,200.09 L747.34,199.55 L748.96,202.13 L750.58,203.11 L751.80,201.72 L753.01,199.55 L754.23,201.62 L755.45,203.11 L757.07,202.16 L758.69,200.68 L760.31,201.49 L761.93,201.49 L763.55,200.23 L765.17,197.44 L766.79,199.37 L768.41,200.68 L770.03,200.47 L771.66,199.06 L773.28,198.89 L774.90,197.44 L776.52,201.49 L778.14,199.26 L779.76,197.93 L781.38,198.49 L783.00,200.20 L784.22,199.65 L785.43,199.55 L787.06,201.92 L788.68,204.74 L790.03,205.76 L791.38,208.11 L792.73,208.79 L794.35,205.22 L795.97,200.68 L797.59,203.52 L799.21,205.55 L800.43,204.93 L801.64,203.11 L803.27,209.29 L804.89,214.46 L806.24,207.94 L807.59,199.88 L808.94,193.71 L810.56,194.49 L812.18,196.63 L813.40,197.49 L814.61,199.06 L816.23,196.63 L817.85,203.11 L819.48,199.06 L820.69,201.28 L821.91,202.30 L823.53,203.27 L825.15,203.11 L826.50,203.92 L827.85,202.41 L829.20,203.11 L830.82,201.92 L832.44,201.49 L834.06,199.80 L835.69,199.87 L836.90,203.01 L838.12,206.68 L839.74,204.01 L841.36,202.30 L842.98,202.39 L844.60,203.92" fill="none" stroke="#e3363c" stroke-width="0.85" stroke-opacity="0.9" stroke-linejoin="round"/>
<text x="764.30" y="198.20" font-size="14.9" fill="#e3363c" stroke="#e3363c" stroke-width="0.3" text-anchor="middle" font-weight="normal" >84.9</text>
<rect x="851.50" y="151.00" width="163.00" height="64.50" rx="2" fill="#181b1f" stroke="rgba(204,204,220,0.06)" stroke-width="1"/>
<text x="857.00" y="164.20" font-size="9.3" fill="#ccccdc" stroke="#ccccdc" stroke-width="0.28" text-anchor="start" font-weight="normal" >Sign ups</text>
<path d="M852.30,206.36 L853.76,205.42 L855.21,203.37 L856.67,202.30 L858.29,202.71 L859.92,204.41 L861.54,201.75 L863.16,199.55 L864.37,199.95 L865.59,201.49 L867.05,200.24 L868.51,199.87 L869.88,201.68 L871.26,203.92 L872.48,205.81 L873.69,208.79 L875.15,205.34 L876.61,202.30 L877.99,203.43 L879.37,205.55 L880.58,204.10 L881.80,203.11 L883.26,201.09 L884.72,199.55 L886.09,201.82 L887.47,205.06 L888.82,203.64 L890.17,204.03 L891.53,203.11 L893.15,204.67 L894.77,205.55 L896.23,206.99 L897.69,207.17 L899.63,201.49 L901.25,206.68 L902.87,204.95 L904.49,201.49 L906.11,200.31 L907.74,197.93 L908.95,200.99 L910.17,203.11 L911.38,202.54 L912.60,200.20 L913.81,201.87 L915.03,203.11 L916.25,202.70 L917.46,200.68 L918.68,203.50 L919.89,205.55 L921.11,204.61 L922.32,203.11 L923.95,203.78 L925.57,203.92 L927.19,203.92 L928.81,203.11 L930.43,203.48 L932.05,202.30 L933.40,202.34 L934.75,201.16 L936.10,201.49 L937.72,203.92 L938.94,201.89 L940.16,198.58 L941.37,200.89 L942.59,202.30 L944.21,202.31 L945.83,201.17 L947.04,202.37 L948.26,203.11 L949.48,202.85 L950.69,201.81 L951.91,202.33 L953.12,201.17 L954.74,203.60 L956.37,205.06 L957.58,204.49 L958.80,203.11 L960.15,204.69 L961.50,204.55 L962.85,206.03 L964.47,204.02 L966.09,202.79 L967.31,203.82 L968.52,206.36 L969.74,209.73 L970.95,214.46 L972.17,212.89 L973.39,212.03 L974.60,206.57 L975.82,202.30 L977.03,197.29 L978.25,193.39 L979.46,194.20 L980.68,196.63 L981.90,197.38 L983.11,199.55 L984.73,198.58 L986.35,206.36 L987.57,204.75 L988.79,203.92 L990.14,202.77 L991.49,203.65 L992.84,203.11 L994.46,204.41 L996.08,204.74 L997.70,205.06 L999.32,203.92 L1000.67,203.40 L1002.02,201.77 L1003.37,201.49 L1004.59,204.36 L1005.81,207.65 L1007.43,205.13 L1009.05,203.92 L1010.26,203.76 L1011.48,205.06 L1013.10,203.11 L1013.10,215.1 L852.30,215.1 Z" fill="rgba(55,135,45,0.30)"/>
<path d="M852.30,206.36 L853.76,205.42 L855.21,203.37 L856.67,202.30 L858.29,202.71 L859.92,204.41 L861.54,201.75 L863.16,199.55 L864.37,199.95 L865.59,201.49 L867.05,200.24 L868.51,199.87 L869.88,201.68 L871.26,203.92 L872.48,205.81 L873.69,208.79 L875.15,205.34 L876.61,202.30 L877.99,203.43 L879.37,205.55 L880.58,204.10 L881.80,203.11 L883.26,201.09 L884.72,199.55 L886.09,201.82 L887.47,205.06 L888.82,203.64 L890.17,204.03 L891.53,203.11 L893.15,204.67 L894.77,205.55 L896.23,206.99 L897.69,207.17 L899.63,201.49 L901.25,206.68 L902.87,204.95 L904.49,201.49 L906.11,200.31 L907.74,197.93 L908.95,200.99 L910.17,203.11 L911.38,202.54 L912.60,200.20 L913.81,201.87 L915.03,203.11 L916.25,202.70 L917.46,200.68 L918.68,203.50 L919.89,205.55 L921.11,204.61 L922.32,203.11 L923.95,203.78 L925.57,203.92 L927.19,203.92 L928.81,203.11 L930.43,203.48 L932.05,202.30 L933.40,202.34 L934.75,201.16 L936.10,201.49 L937.72,203.92 L938.94,201.89 L940.16,198.58 L941.37,200.89 L942.59,202.30 L944.21,202.31 L945.83,201.17 L947.04,202.37 L948.26,203.11 L949.48,202.85 L950.69,201.81 L951.91,202.33 L953.12,201.17 L954.74,203.60 L956.37,205.06 L957.58,204.49 L958.80,203.11 L960.15,204.69 L961.50,204.55 L962.85,206.03 L964.47,204.02 L966.09,202.79 L967.31,203.82 L968.52,206.36 L969.74,209.73 L970.95,214.46 L972.17,212.89 L973.39,212.03 L974.60,206.57 L975.82,202.30 L977.03,197.29 L978.25,193.39 L979.46,194.20 L980.68,196.63 L981.90,197.38 L983.11,199.55 L984.73,198.58 L986.35,206.36 L987.57,204.75 L988.79,203.92 L990.14,202.77 L991.49,203.65 L992.84,203.11 L994.46,204.41 L996.08,204.74 L997.70,205.06 L999.32,203.92 L1000.67,203.40 L1002.02,201.77 L1003.37,201.49 L1004.59,204.36 L1005.81,207.65 L1007.43,205.13 L1009.05,203.92 L1010.26,203.76 L1011.48,205.06 L1013.10,203.11" fill="none" stroke="#3ec13e" stroke-width="0.85" stroke-opacity="0.9" stroke-linejoin="round"/>
<text x="932.70" y="198.20" font-size="14.9" fill="#3ec13e" stroke="#3ec13e" stroke-width="0.3" text-anchor="middle" font-weight="normal" >283</text>
<rect x="10.00" y="220.10" width="667.50" height="180.40" rx="2" fill="#181b1f" stroke="rgba(204,204,220,0.06)" stroke-width="1"/>
<text x="344.00" y="234.00" font-size="9" fill="#ccccdc" stroke="#ccccdc" stroke-width="0.28" text-anchor="middle" font-weight="normal" >server requests</text>
<line x1="32.6" y1="251.50" x2="661.3" y2="251.50" stroke="rgba(204,204,220,0.12)" stroke-width="1"/>
<text x="28.50" y="254.20" font-size="7.2" fill="#ccccdc" stroke="#ccccdc" stroke-width="0.28" text-anchor="end" font-weight="normal" >150</text>
<line x1="32.6" y1="288.93" x2="661.3" y2="288.93" stroke="rgba(204,204,220,0.12)" stroke-width="1"/>
<text x="28.50" y="291.63" font-size="7.2" fill="#ccccdc" stroke="#ccccdc" stroke-width="0.28" text-anchor="end" font-weight="normal" >100</text>
<line x1="32.6" y1="326.36" x2="661.3" y2="326.36" stroke="rgba(204,204,220,0.12)" stroke-width="1"/>
<text x="28.50" y="329.06" font-size="7.2" fill="#ccccdc" stroke="#ccccdc" stroke-width="0.28" text-anchor="end" font-weight="normal" >50</text>
<line x1="32.6" y1="363.79" x2="661.3" y2="363.79" stroke="rgba(204,204,220,0.12)" stroke-width="1"/>
<text x="28.50" y="366.49" font-size="7.2" fill="#ccccdc" stroke="#ccccdc" stroke-width="0.28" text-anchor="end" font-weight="normal" >0</text>
<path d="M32.60,282.14 L35.03,276.11 L37.04,275.52 L39.05,275.10 L41.06,273.70 L43.07,272.09 L45.08,274.86 L47.09,276.11 L49.10,275.54 L51.11,275.10 L53.12,273.61 L55.13,272.09 L57.14,277.77 L59.15,283.14 L61.16,280.06 L63.17,278.12 L66.18,281.13 L69.20,279.12 L71.21,279.64 L73.22,280.13 L75.23,280.86 L77.24,281.13 L79.75,278.64 L82.26,275.10 L84.27,276.38 L86.28,279.12 L88.29,277.76 L90.30,277.11 L92.31,277.88 L94.32,280.13 L96.83,280.18 L99.35,279.12 L101.36,277.96 L103.37,276.11 L105.38,276.79 L107.39,279.12 L110.40,275.10 L112.41,271.14 L114.42,265.45 L116.43,272.62 L118.44,278.12 L120.45,276.38 L122.46,274.10 L124.47,275.81 L126.48,277.11 L128.49,277.00 L130.50,278.12 L132.51,276.74 L134.52,277.11 L137.04,278.67 L139.55,280.13 L141.56,276.82 L143.57,275.10 L146.08,275.55 L148.59,277.11 L150.60,277.65 L152.61,279.12 L155.13,279.78 L157.64,282.14 L159.65,279.56 L161.66,277.11 L163.67,278.51 L165.68,280.13 L168.19,278.73 L170.70,276.11 L172.71,277.65 L174.72,279.12 L176.73,278.87 L178.74,278.12 L180.75,277.61 L182.76,277.11 L184.77,279.41 L186.78,281.13 L188.02,278.12 L190.03,277.54 L192.04,277.11 L194.05,274.90 L196.06,273.49 L198.07,275.69 L200.08,276.11 L202.09,279.01 L204.10,280.13 L206.11,281.24 L208.12,281.13 L210.13,282.51 L212.14,283.14 L214.15,280.80 L216.16,279.12 L218.17,279.14 L220.18,280.13 L222.19,279.24 L224.20,279.12 L226.21,277.84 L228.22,278.12 L230.23,277.59 L232.24,276.11 L234.25,279.44 L236.26,283.14 L238.27,282.26 L240.28,280.13 L242.29,280.42 L244.30,281.13 L246.81,282.46 L249.32,282.14 L251.33,279.24 L253.34,275.10 L255.35,276.71 L257.36,280.13 L259.87,282.92 L262.39,286.76 L264.40,284.68 L266.41,281.13 L268.92,278.06 L271.43,275.10 L273.44,277.98 L275.45,279.12 L277.46,277.93 L279.47,277.11 L281.98,275.34 L284.50,275.10 L287.01,275.84 L289.52,276.11 L292.04,277.61 L294.55,278.12 L296.56,277.20 L298.57,277.11 L300.58,275.36 L302.59,275.10 L304.60,275.80 L306.61,277.11 L308.62,277.95 L310.63,277.11 L313.14,276.07 L315.65,274.10 L317.66,275.42 L319.67,278.12 L321.68,276.15 L323.69,275.10 L325.70,275.39 L327.71,277.11 L329.72,278.83 L331.73,282.14 L333.74,281.67 L335.75,280.13 L337.76,279.04 L339.77,279.12 L341.90,278.72 L344.02,278.12 L346.53,277.02 L349.05,276.11 L351.56,276.05 L354.07,277.11 L356.58,276.32 L359.10,274.70 L361.61,275.44 L364.12,277.51 L366.63,277.37 L369.15,276.71 L372.16,275.10 L374.67,274.91 L377.19,276.11 L379.70,274.96 L382.21,274.10 L384.22,275.59 L386.23,278.12 L388.24,276.19 L390.25,275.10 L392.76,276.45 L395.28,276.11 L397.79,278.16 L400.30,279.12 L402.31,277.76 L404.32,277.11 L406.83,276.80 L409.35,275.10 L411.36,273.37 L413.37,272.69 L415.88,272.20 L418.39,272.09 L420.40,274.23 L422.41,275.10 L424.42,277.37 L426.43,279.12 L428.44,276.73 L430.45,276.65 L432.46,274.10 L434.97,274.58 L437.49,276.11 L440.00,276.17 L442.51,277.11 L444.52,276.60 L446.53,275.10 L448.54,276.30 L450.55,278.12 L453.07,276.74 L455.58,276.11 L458.09,274.03 L460.60,273.49 L462.61,275.57 L464.62,279.12 L467.64,283.14 L469.65,279.27 L471.66,275.10 L474.67,278.12 L476.68,280.17 L478.69,283.14 L481.21,281.82 L483.72,280.13 L485.73,279.19 L487.74,278.72 L489.75,279.84 L491.76,281.13 L493.77,281.45 L495.78,280.13 L497.90,278.59 L500.03,277.11 L502.04,279.25 L504.05,281.13 L506.06,279.58 L508.07,276.71 L510.08,278.35 L512.09,281.13 L515.10,281.13 L517.11,279.50 L519.12,279.12 L521.13,281.87 L523.14,283.14 L525.15,280.50 L527.16,276.71 L530.18,281.13 L533.19,291.18 L536.21,298.22 L538.22,295.25 L540.23,293.19 L542.24,291.63 L544.25,291.18 L547.26,288.17 L550.28,275.10 L553.29,267.06 L555.30,267.99 L557.31,268.07 L559.32,268.52 L561.33,266.85 L563.34,267.06 L565.35,268.07 L567.36,267.46 L569.37,269.46 L571.38,270.08 L573.39,274.99 L575.40,279.52 L577.91,275.16 L580.43,271.08 L582.44,272.88 L584.45,276.11 L586.46,278.79 L588.47,283.14 L590.48,281.96 L592.49,279.12 L595.00,277.85 L597.51,277.51 L599.52,278.68 L601.53,279.12 L603.54,279.69 L605.55,281.13 L608.07,280.71 L610.58,279.12 L613.09,278.79 L615.60,278.12 L617.61,276.24 L619.62,275.10 L622.14,277.03 L624.65,280.13 L627.16,281.53 L629.67,282.14 L632.19,279.65 L634.70,278.72 L636.71,280.44 L638.72,283.14 L640.73,281.74 L642.74,280.13 L644.75,281.26 L646.76,281.13 L648.77,280.33 L650.78,279.12 L652.89,279.73 L655.00,281.13 L657.75,281.88 L660.50,281.13 L660.50,363.8 L32.60,363.8 Z" fill="#15365b"/>
<path d="M32.60,303.24 L35.03,298.22 L37.04,298.17 L39.05,298.22 L41.06,296.99 L43.07,295.20 L45.08,297.31 L47.09,298.82 L49.10,297.37 L51.11,297.21 L53.12,295.83 L55.13,296.21 L57.14,300.50 L59.15,305.25 L61.16,301.33 L63.17,298.22 L65.18,300.78 L67.19,302.24 L69.20,302.08 L71.21,301.23 L73.22,301.08 L75.23,300.67 L77.24,300.23 L79.75,299.51 L82.26,298.22 L84.27,298.25 L86.28,299.45 L88.29,300.23 L90.30,300.29 L92.31,302.30 L94.32,302.24 L96.83,300.94 L99.35,301.23 L101.36,300.30 L103.37,298.22 L105.38,298.46 L107.39,300.23 L109.40,299.56 L111.41,298.22 L114.42,288.17 L116.43,294.91 L118.44,302.24 L120.45,299.05 L122.46,296.21 L124.47,297.83 L126.48,298.22 L128.49,298.35 L130.50,300.23 L132.51,298.93 L134.52,299.22 L137.04,301.98 L139.55,303.24 L141.56,300.74 L143.57,298.22 L146.08,298.48 L148.59,300.23 L150.60,301.61 L152.61,301.23 L155.13,303.54 L157.64,304.25 L159.65,300.53 L161.66,298.22 L163.67,300.09 L165.68,302.24 L168.19,299.57 L170.70,298.22 L172.71,299.39 L174.72,301.23 L176.73,300.44 L178.74,299.22 L180.75,298.11 L182.76,298.22 L184.77,301.08 L186.78,303.24 L188.02,298.22 L190.03,298.41 L192.04,300.23 L194.05,297.12 L196.06,295.20 L198.07,297.28 L200.08,298.22 L202.09,299.04 L204.10,300.23 L206.11,301.09 L208.12,302.24 L210.13,302.91 L212.14,303.24 L214.15,301.69 L216.16,300.23 L218.17,301.53 L220.18,303.24 L222.19,300.39 L224.20,299.22 L226.21,300.13 L228.22,300.23 L230.23,300.57 L232.24,299.22 L234.25,303.09 L236.26,305.25 L238.27,304.04 L240.28,302.24 L242.29,302.48 L244.30,303.24 L246.81,304.50 L249.32,306.26 L251.33,301.57 L253.34,296.21 L255.35,300.04 L257.36,303.24 L259.87,304.05 L262.39,306.26 L264.40,303.77 L266.41,302.24 L268.92,298.98 L271.43,296.21 L273.44,298.74 L275.45,301.23 L278.47,297.21 L281.48,301.23 L283.49,299.78 L285.50,297.21 L287.51,297.71 L289.52,298.22 L292.04,298.37 L294.55,300.23 L296.56,300.30 L298.57,299.22 L300.58,299.60 L302.59,300.23 L304.60,299.26 L306.61,298.22 L308.62,299.22 L310.63,301.23 L313.14,298.59 L315.65,296.21 L317.66,298.01 L319.67,300.23 L321.68,298.71 L323.69,296.21 L325.70,297.50 L327.71,300.23 L329.72,302.83 L331.73,305.25 L333.74,303.16 L335.75,302.24 L337.76,302.09 L339.77,301.23 L341.90,298.89 L344.02,298.22 L346.53,298.32 L349.05,299.22 L351.56,298.74 L354.07,298.82 L356.58,298.46 L359.10,297.61 L361.61,297.81 L364.12,299.62 L366.63,299.85 L369.15,300.23 L372.16,296.21 L374.67,297.39 L377.19,299.62 L379.70,298.02 L382.21,297.21 L384.22,298.68 L386.23,300.23 L388.24,299.75 L390.25,297.61 L392.76,297.88 L395.28,298.22 L397.79,300.34 L400.30,300.83 L402.31,299.43 L404.32,299.22 L406.83,298.98 L409.35,297.21 L411.36,295.76 L413.37,294.80 L415.88,294.44 L418.39,295.20 L420.40,297.16 L422.41,298.22 L424.42,300.47 L426.43,301.23 L428.44,298.67 L430.45,297.46 L432.46,296.21 L434.97,297.70 L437.49,298.22 L440.00,297.43 L442.51,297.21 L444.52,296.24 L446.53,296.21 L448.54,297.33 L450.55,300.23 L453.07,298.39 L455.58,298.22 L458.09,296.92 L460.60,295.20 L462.61,299.29 L464.62,301.63 L467.64,303.24 L469.65,300.62 L471.66,296.21 L474.67,300.23 L476.68,302.54 L478.69,304.85 L481.21,301.18 L483.72,299.22 L485.73,300.41 L487.74,302.24 L489.75,303.26 L491.76,303.24 L493.77,303.34 L495.78,302.24 L497.90,300.98 L500.03,299.22 L502.04,300.74 L504.05,303.24 L506.06,301.28 L508.07,299.22 L510.08,301.19 L512.09,303.24 L515.10,302.24 L517.11,300.96 L519.12,299.22 L521.13,302.31 L523.14,306.26 L525.15,303.04 L527.16,298.22 L530.18,305.25 L533.19,311.28 L536.21,314.30 L538.22,314.00 L540.23,312.29 L542.24,310.67 L544.25,310.28 L547.26,303.24 L550.28,295.20 L553.29,290.18 L555.30,290.30 L557.31,291.18 L559.32,291.72 L561.33,290.51 L563.34,290.78 L565.35,291.78 L567.36,291.18 L569.37,293.22 L571.38,295.20 L573.39,298.37 L575.40,300.83 L577.91,297.38 L580.43,293.19 L582.44,295.69 L584.45,299.22 L586.46,300.84 L588.47,303.24 L590.48,301.29 L592.49,300.23 L595.00,300.05 L597.51,299.22 L599.52,301.08 L601.53,302.24 L603.54,302.08 L605.55,303.24 L608.07,301.93 L610.58,299.22 L613.09,298.58 L615.60,298.22 L617.61,297.75 L619.62,298.22 L622.14,299.10 L624.65,300.23 L627.16,302.09 L629.67,302.24 L632.19,300.33 L634.70,298.22 L636.71,300.95 L638.72,303.24 L640.73,302.49 L642.74,300.23 L644.75,302.06 L646.76,302.24 L648.77,301.70 L650.78,300.23 L652.89,300.78 L655.00,301.63 L657.75,301.79 L660.50,301.63 L660.50,363.8 L32.60,363.8 Z" fill="#1f5386"/>
<path d="M32.60,323.34 L35.03,320.33 L37.37,319.27 L39.72,319.28 L42.06,318.32 L44.57,319.62 L47.09,320.33 L49.10,320.58 L51.11,319.72 L53.12,319.52 L55.13,320.33 L57.14,321.91 L59.15,324.35 L61.16,321.77 L63.17,320.33 L65.68,320.89 L68.19,322.34 L70.20,323.72 L72.21,324.35 L74.72,322.75 L77.24,322.34 L79.75,321.38 L82.26,320.33 L84.27,320.20 L86.28,320.67 L88.29,321.33 L90.30,321.89 L92.31,323.21 L94.32,323.34 L96.83,322.51 L99.35,321.33 L101.36,319.55 L103.37,319.32 L105.38,319.97 L107.39,321.33 L109.73,318.76 L112.08,317.91 L114.42,315.30 L116.43,319.31 L118.44,322.34 L120.95,320.31 L123.47,317.31 L125.98,319.84 L128.49,321.33 L130.50,321.39 L132.51,321.38 L134.52,320.33 L137.04,322.30 L139.55,323.34 L141.56,321.44 L143.57,320.33 L146.08,321.39 L148.59,321.33 L150.60,321.81 L152.61,322.34 L155.13,324.25 L157.64,325.35 L159.65,322.94 L161.66,320.33 L163.67,321.72 L165.68,323.34 L168.19,321.62 L170.70,320.33 L172.71,321.72 L174.72,323.34 L176.73,322.04 L178.74,321.33 L180.75,320.22 L182.76,320.33 L184.77,322.35 L186.78,323.34 L188.02,319.32 L190.03,321.31 L192.04,322.34 L194.05,321.41 L196.06,318.92 L198.07,320.43 L200.08,321.33 L202.09,322.42 L204.10,323.34 L206.11,323.94 L208.12,323.74 L210.13,323.46 L212.14,324.35 L214.15,322.62 L216.16,320.33 L218.17,321.24 L220.18,322.34 L222.19,321.32 L224.20,321.33 L226.21,320.86 L228.22,321.33 L230.23,321.87 L232.24,322.34 L234.25,323.45 L236.26,325.35 L238.27,323.28 L240.28,321.33 L242.29,322.51 L244.30,323.34 L246.81,323.68 L249.32,324.35 L251.33,320.74 L253.34,318.32 L255.35,320.81 L257.36,323.34 L259.87,324.12 L262.39,325.75 L264.40,324.12 L266.41,323.34 L268.92,320.84 L271.43,319.32 L273.44,320.11 L275.45,321.33 L278.47,318.92 L281.48,321.33 L283.49,319.64 L285.50,319.32 L287.51,320.07 L289.52,320.33 L292.04,321.56 L294.55,321.33 L296.56,321.16 L298.57,321.33 L300.58,321.18 L302.59,320.33 L304.60,322.02 L306.61,322.34 L308.62,321.10 L310.63,321.33 L313.14,319.25 L315.65,318.32 L317.66,320.82 L319.67,322.34 L321.68,321.37 L323.69,319.32 L325.70,320.55 L327.71,321.33 L329.72,322.80 L331.73,325.35 L333.74,324.21 L335.75,323.34 L337.76,323.93 L339.77,323.34 L341.90,322.95 L344.02,321.33 L346.53,321.31 L349.05,320.33 L351.56,319.85 L354.07,320.33 L356.58,320.39 L359.10,319.32 L361.61,319.93 L364.12,320.93 L366.63,320.97 L369.15,320.33 L372.16,319.32 L374.67,319.24 L377.19,320.33 L379.70,320.58 L382.21,319.32 L384.22,320.99 L386.23,322.34 L388.24,321.69 L390.25,320.33 L392.76,320.37 L395.28,321.33 L397.79,322.02 L400.30,322.34 L402.31,321.46 L404.32,320.33 L406.83,319.97 L409.35,319.32 L411.36,318.09 L413.37,317.31 L415.88,318.48 L418.39,318.92 L420.40,318.87 L422.41,319.32 L424.42,320.50 L426.43,322.34 L428.44,320.79 L430.45,320.62 L432.46,319.32 L434.97,319.20 L437.49,320.33 L440.00,320.39 L442.51,321.33 L444.52,319.64 L446.53,319.32 L448.54,321.06 L450.55,322.34 L453.07,321.42 L455.58,320.33 L458.09,319.69 L460.60,318.92 L462.61,319.89 L464.62,322.34 L467.64,323.34 L469.65,321.03 L471.66,318.92 L474.67,321.33 L476.68,322.59 L478.69,324.35 L481.21,323.19 L483.72,323.34 L485.73,322.04 L487.74,322.34 L489.75,323.13 L491.76,322.34 L493.77,322.23 L495.78,323.34 L497.90,321.52 L500.03,320.33 L502.04,320.96 L504.05,322.34 L506.06,321.79 L508.07,320.93 L510.08,321.46 L512.09,323.34 L515.10,322.34 L517.11,321.28 L519.12,320.33 L521.13,323.13 L523.14,326.36 L525.15,323.37 L527.16,319.32 L530.18,325.35 L533.19,329.37 L536.21,331.38 L538.22,329.08 L540.23,328.37 L542.24,329.11 L544.25,330.38 L547.26,324.35 L550.28,318.32 L553.29,315.30 L555.30,314.79 L557.31,314.30 L559.32,315.25 L561.33,314.73 L563.34,314.90 L565.35,314.56 L567.36,314.30 L569.37,316.08 L571.38,317.31 L573.39,318.49 L575.40,320.33 L577.91,318.57 L580.43,318.32 L582.44,319.32 L584.45,320.33 L586.46,322.99 L588.47,324.35 L590.48,323.72 L592.49,322.34 L595.00,322.45 L597.51,323.34 L599.52,323.13 L601.53,322.34 L603.54,323.40 L605.55,323.34 L608.07,322.45 L610.58,322.34 L613.09,321.97 L615.60,321.33 L617.61,320.10 L619.62,319.32 L622.14,320.42 L624.65,322.34 L627.16,323.00 L629.67,324.35 L632.19,321.86 L634.70,320.33 L636.71,322.10 L638.72,324.35 L640.73,322.10 L642.74,321.33 L644.75,322.17 L646.76,323.34 L648.77,321.17 L650.78,320.33 L652.89,322.05 L655.00,322.94 L657.75,323.10 L660.50,322.94 L660.50,363.8 L32.60,363.8 Z" fill="#3d6386"/>
<path d="M32.60,343.44 L35.03,341.43 L37.04,340.96 L39.05,341.43 L41.06,341.17 L43.07,340.43 L45.08,341.92 L47.09,343.04 L49.10,342.97 L51.11,341.83 L53.12,341.56 L55.13,341.83 L58.14,343.84 L60.15,342.55 L62.16,341.83 L64.67,341.41 L67.19,340.43 L70.20,343.04 L72.71,343.43 L75.23,343.44 L77.74,342.70 L80.25,342.44 L82.26,342.66 L84.27,342.44 L86.28,342.51 L88.29,342.84 L90.30,343.47 L92.31,343.44 L94.82,342.48 L97.34,342.44 L99.35,341.10 L101.36,340.43 L103.37,341.91 L105.38,342.44 L107.39,341.76 L109.40,341.43 L111.41,340.14 L113.42,339.42 L115.93,341.50 L118.44,342.84 L120.45,342.09 L122.46,341.03 L124.97,341.61 L127.49,343.04 L129.50,342.80 L131.51,342.44 L133.52,343.14 L135.53,343.44 L138.04,343.04 L140.55,343.44 L143.07,342.62 L145.58,341.43 L147.59,341.98 L149.60,343.44 L151.61,342.74 L153.62,342.44 L155.63,342.94 L157.64,344.45 L159.65,343.09 L161.66,342.44 L163.67,343.51 L165.68,343.44 L168.19,342.82 L170.70,342.44 L172.71,343.33 L174.72,343.04 L177.24,342.16 L179.75,341.43 L182.26,342.57 L184.77,343.44 L188.02,342.44 L190.03,342.58 L192.04,341.83 L194.05,342.86 L196.06,343.44 L198.07,342.78 L200.08,343.04 L202.09,343.35 L204.10,343.44 L206.11,344.11 L208.12,344.45 L210.13,344.57 L212.14,345.45 L214.15,343.66 L216.16,342.84 L218.17,343.59 L220.18,343.44 L222.19,343.26 L224.20,343.04 L226.21,342.87 L228.22,343.44 L230.23,343.18 L232.24,343.04 L234.25,343.71 L236.26,345.05 L238.27,344.60 L240.28,343.44 L242.29,343.95 L244.30,344.45 L246.81,343.47 L249.32,343.44 L251.33,342.82 L253.34,341.43 L255.35,341.94 L257.36,343.44 L259.87,344.18 L262.39,345.45 L264.40,343.88 L266.41,343.44 L268.92,342.73 L271.43,341.43 L273.44,341.47 L275.45,342.44 L278.47,341.03 L281.48,343.04 L283.49,342.77 L285.50,342.44 L287.51,342.45 L289.52,343.44 L292.04,342.92 L294.55,342.44 L296.56,342.96 L298.57,343.04 L300.58,342.28 L302.59,341.43 L304.60,342.38 L306.61,343.44 L308.62,342.92 L310.63,342.44 L313.14,341.86 L315.65,341.43 L317.66,342.55 L319.67,343.44 L321.68,342.15 L323.69,341.83 L325.70,342.61 L327.71,343.44 L329.72,343.63 L331.73,344.45 L333.74,345.19 L335.75,345.05 L337.76,344.77 L339.77,343.44 L341.90,342.42 L344.02,342.44 L346.53,341.71 L349.05,341.83 L351.56,341.88 L354.07,341.43 L356.58,342.02 L359.10,342.44 L361.61,341.36 L364.12,341.43 L366.63,342.68 L369.15,343.44 L372.16,342.44 L374.67,341.96 L377.19,340.43 L379.70,341.04 L382.21,341.83 L384.22,342.96 L386.23,344.45 L388.24,344.03 L390.25,343.44 L392.76,343.17 L395.28,341.83 L397.79,342.35 L400.30,343.44 L402.31,342.20 L404.32,341.43 L406.83,341.06 L409.35,341.43 L411.36,341.39 L413.37,341.03 L415.88,340.69 L418.39,340.43 L420.40,340.64 L422.41,341.43 L424.42,342.10 L426.43,343.04 L428.44,342.28 L430.45,342.41 L432.46,342.44 L434.97,342.51 L437.49,341.43 L440.00,342.34 L442.51,343.04 L444.52,342.18 L446.53,341.83 L448.54,343.16 L450.55,343.44 L453.07,342.47 L455.58,341.83 L458.09,341.13 L460.60,341.03 L462.61,341.48 L464.62,343.04 L467.64,343.44 L469.65,342.52 L471.66,342.44 L474.67,343.44 L476.68,343.38 L478.69,344.05 L481.21,343.42 L483.72,343.44 L485.73,343.39 L487.74,342.44 L489.75,341.65 L491.76,341.43 L493.77,341.33 L495.78,341.83 L497.90,341.56 L500.03,341.03 L502.04,342.74 L504.05,343.44 L506.06,343.69 L508.07,344.45 L510.08,344.26 L512.09,343.44 L514.10,342.78 L516.11,342.44 L518.12,343.01 L520.13,343.44 L523.14,345.45 L526.16,341.83 L528.17,343.26 L530.18,344.45 L533.19,346.46 L536.21,348.47 L538.22,347.99 L540.23,346.46 L542.24,347.07 L544.25,347.06 L546.26,344.26 L548.27,341.43 L550.28,340.84 L552.29,339.42 L554.80,338.76 L557.31,338.42 L559.32,338.95 L561.33,340.31 L563.34,340.43 L565.35,338.97 L567.36,337.41 L569.37,339.75 L571.38,341.43 L573.39,342.21 L575.40,343.44 L577.91,343.14 L580.43,341.83 L582.44,342.27 L584.45,342.44 L586.46,343.14 L588.47,344.45 L590.48,344.47 L592.49,343.44 L595.00,342.90 L597.51,342.44 L599.52,342.75 L601.53,343.44 L603.54,343.16 L605.55,343.44 L608.07,342.46 L610.58,342.44 L613.09,341.37 L615.60,341.03 L617.61,341.96 L619.62,342.44 L622.14,342.51 L624.65,343.44 L627.16,342.95 L629.67,343.04 L632.19,343.38 L634.70,343.84 L636.71,343.70 L638.72,343.44 L640.73,343.10 L642.74,343.04 L644.75,343.58 L646.76,343.44 L648.77,342.65 L650.78,342.44 L652.89,342.58 L655.00,343.04 L657.75,342.95 L660.50,343.04 L660.50,363.8 L32.60,363.8 Z" fill="#7a8c9a"/>
<line x1="34.00" y1="251.5" x2="34.00" y2="363.8" stroke="rgba(204,204,220,0.12)" stroke-width="1"/>
<text x="34.00" y="376.20" font-size="7.2" fill="#ccccdc" stroke="#ccccdc" stroke-width="0.28" text-anchor="middle" font-weight="normal" >16:50</text>
<line x1="86.45" y1="251.5" x2="86.45" y2="363.8" stroke="rgba(204,204,220,0.12)" stroke-width="1"/>
<text x="86.45" y="376.20" font-size="7.2" fill="#ccccdc" stroke="#ccccdc" stroke-width="0.28" text-anchor="middle" font-weight="normal" >16:55</text>
<line x1="138.90" y1="251.5" x2="138.90" y2="363.8" stroke="rgba(204,204,220,0.12)" stroke-width="1"/>
<text x="138.90" y="376.20" font-size="7.2" fill="#ccccdc" stroke="#ccccdc" stroke-width="0.28" text-anchor="middle" font-weight="normal" >17:00</text>
<line x1="191.35" y1="251.5" x2="191.35" y2="363.8" stroke="rgba(204,204,220,0.12)" stroke-width="1"/>
<text x="191.35" y="376.20" font-size="7.2" fill="#ccccdc" stroke="#ccccdc" stroke-width="0.28" text-anchor="middle" font-weight="normal" >17:05</text>
<line x1="243.80" y1="251.5" x2="243.80" y2="363.8" stroke="rgba(204,204,220,0.12)" stroke-width="1"/>
<text x="243.80" y="376.20" font-size="7.2" fill="#ccccdc" stroke="#ccccdc" stroke-width="0.28" text-anchor="middle" font-weight="normal" >17:10</text>
<line x1="296.25" y1="251.5" x2="296.25" y2="363.8" stroke="rgba(204,204,220,0.12)" stroke-width="1"/>
<text x="296.25" y="376.20" font-size="7.2" fill="#ccccdc" stroke="#ccccdc" stroke-width="0.28" text-anchor="middle" font-weight="normal" >17:15</text>
<line x1="348.70" y1="251.5" x2="348.70" y2="363.8" stroke="rgba(204,204,220,0.12)" stroke-width="1"/>
<text x="348.70" y="376.20" font-size="7.2" fill="#ccccdc" stroke="#ccccdc" stroke-width="0.28" text-anchor="middle" font-weight="normal" >17:20</text>
<line x1="401.15" y1="251.5" x2="401.15" y2="363.8" stroke="rgba(204,204,220,0.12)" stroke-width="1"/>
<text x="401.15" y="376.20" font-size="7.2" fill="#ccccdc" stroke="#ccccdc" stroke-width="0.28" text-anchor="middle" font-weight="normal" >17:25</text>
<line x1="453.60" y1="251.5" x2="453.60" y2="363.8" stroke="rgba(204,204,220,0.12)" stroke-width="1"/>
<text x="453.60" y="376.20" font-size="7.2" fill="#ccccdc" stroke="#ccccdc" stroke-width="0.28" text-anchor="middle" font-weight="normal" >17:30</text>
<line x1="506.05" y1="251.5" x2="506.05" y2="363.8" stroke="rgba(204,204,220,0.12)" stroke-width="1"/>
<text x="506.05" y="376.20" font-size="7.2" fill="#ccccdc" stroke="#ccccdc" stroke-width="0.28" text-anchor="middle" font-weight="normal" >17:35</text>
<line x1="558.50" y1="251.5" x2="558.50" y2="363.8" stroke="rgba(204,204,220,0.12)" stroke-width="1"/>
<text x="558.50" y="376.20" font-size="7.2" fill="#ccccdc" stroke="#ccccdc" stroke-width="0.28" text-anchor="middle" font-weight="normal" >17:40</text>
<line x1="610.95" y1="251.5" x2="610.95" y2="363.8" stroke="rgba(204,204,220,0.12)" stroke-width="1"/>
<text x="610.95" y="376.20" font-size="7.2" fill="#ccccdc" stroke="#ccccdc" stroke-width="0.28" text-anchor="middle" font-weight="normal" >17:45</text>
<line x1="32.6" y1="288.93" x2="661.3" y2="288.93" stroke="rgba(204,204,220,0.07)" stroke-width="1"/>
<line x1="32.6" y1="326.36" x2="661.3" y2="326.36" stroke="rgba(204,204,220,0.07)" stroke-width="1"/>
<path d="M32.60,282.14 L35.03,276.11 L37.04,275.52 L39.05,275.10 L41.06,273.70 L43.07,272.09 L45.08,274.86 L47.09,276.11 L49.10,275.54 L51.11,275.10 L53.12,273.61 L55.13,272.09 L57.14,277.77 L59.15,283.14 L61.16,280.06 L63.17,278.12 L66.18,281.13 L69.20,279.12 L71.21,279.64 L73.22,280.13 L75.23,280.86 L77.24,281.13 L79.75,278.64 L82.26,275.10 L84.27,276.38 L86.28,279.12 L88.29,277.76 L90.30,277.11 L92.31,277.88 L94.32,280.13 L96.83,280.18 L99.35,279.12 L101.36,277.96 L103.37,276.11 L105.38,276.79 L107.39,279.12 L110.40,275.10 L112.41,271.14 L114.42,265.45 L116.43,272.62 L118.44,278.12 L120.45,276.38 L122.46,274.10 L124.47,275.81 L126.48,277.11 L128.49,277.00 L130.50,278.12 L132.51,276.74 L134.52,277.11 L137.04,278.67 L139.55,280.13 L141.56,276.82 L143.57,275.10 L146.08,275.55 L148.59,277.11 L150.60,277.65 L152.61,279.12 L155.13,279.78 L157.64,282.14 L159.65,279.56 L161.66,277.11 L163.67,278.51 L165.68,280.13 L168.19,278.73 L170.70,276.11 L172.71,277.65 L174.72,279.12 L176.73,278.87 L178.74,278.12 L180.75,277.61 L182.76,277.11 L184.77,279.41 L186.78,281.13 L188.02,278.12 L190.03,277.54 L192.04,277.11 L194.05,274.90 L196.06,273.49 L198.07,275.69 L200.08,276.11 L202.09,279.01 L204.10,280.13 L206.11,281.24 L208.12,281.13 L210.13,282.51 L212.14,283.14 L214.15,280.80 L216.16,279.12 L218.17,279.14 L220.18,280.13 L222.19,279.24 L224.20,279.12 L226.21,277.84 L228.22,278.12 L230.23,277.59 L232.24,276.11 L234.25,279.44 L236.26,283.14 L238.27,282.26 L240.28,280.13 L242.29,280.42 L244.30,281.13 L246.81,282.46 L249.32,282.14 L251.33,279.24 L253.34,275.10 L255.35,276.71 L257.36,280.13 L259.87,282.92 L262.39,286.76 L264.40,284.68 L266.41,281.13 L268.92,278.06 L271.43,275.10 L273.44,277.98 L275.45,279.12 L277.46,277.93 L279.47,277.11 L281.98,275.34 L284.50,275.10 L287.01,275.84 L289.52,276.11 L292.04,277.61 L294.55,278.12 L296.56,277.20 L298.57,277.11 L300.58,275.36 L302.59,275.10 L304.60,275.80 L306.61,277.11 L308.62,277.95 L310.63,277.11 L313.14,276.07 L315.65,274.10 L317.66,275.42 L319.67,278.12 L321.68,276.15 L323.69,275.10 L325.70,275.39 L327.71,277.11 L329.72,278.83 L331.73,282.14 L333.74,281.67 L335.75,280.13 L337.76,279.04 L339.77,279.12 L341.90,278.72 L344.02,278.12 L346.53,277.02 L349.05,276.11 L351.56,276.05 L354.07,277.11 L356.58,276.32 L359.10,274.70 L361.61,275.44 L364.12,277.51 L366.63,277.37 L369.15,276.71 L372.16,275.10 L374.67,274.91 L377.19,276.11 L379.70,274.96 L382.21,274.10 L384.22,275.59 L386.23,278.12 L388.24,276.19 L390.25,275.10 L392.76,276.45 L395.28,276.11 L397.79,278.16 L400.30,279.12 L402.31,277.76 L404.32,277.11 L406.83,276.80 L409.35,275.10 L411.36,273.37 L413.37,272.69 L415.88,272.20 L418.39,272.09 L420.40,274.23 L422.41,275.10 L424.42,277.37 L426.43,279.12 L428.44,276.73 L430.45,276.65 L432.46,274.10 L434.97,274.58 L437.49,276.11 L440.00,276.17 L442.51,277.11 L444.52,276.60 L446.53,275.10 L448.54,276.30 L450.55,278.12 L453.07,276.74 L455.58,276.11 L458.09,274.03 L460.60,273.49 L462.61,275.57 L464.62,279.12 L467.64,283.14 L469.65,279.27 L471.66,275.10 L474.67,278.12 L476.68,280.17 L478.69,283.14 L481.21,281.82 L483.72,280.13 L485.73,279.19 L487.74,278.72 L489.75,279.84 L491.76,281.13 L493.77,281.45 L495.78,280.13 L497.90,278.59 L500.03,277.11 L502.04,279.25 L504.05,281.13 L506.06,279.58 L508.07,276.71 L510.08,278.35 L512.09,281.13 L515.10,281.13 L517.11,279.50 L519.12,279.12 L521.13,281.87 L523.14,283.14 L525.15,280.50 L527.16,276.71 L530.18,281.13 L533.19,291.18 L536.21,298.22 L538.22,295.25 L540.23,293.19 L542.24,291.63 L544.25,291.18 L547.26,288.17 L550.28,275.10 L553.29,267.06 L555.30,267.99 L557.31,268.07 L559.32,268.52 L561.33,266.85 L563.34,267.06 L565.35,268.07 L567.36,267.46 L569.37,269.46 L571.38,270.08 L573.39,274.99 L575.40,279.52 L577.91,275.16 L580.43,271.08 L582.44,272.88 L584.45,276.11 L586.46,278.79 L588.47,283.14 L590.48,281.96 L592.49,279.12 L595.00,277.85 L597.51,277.51 L599.52,278.68 L601.53,279.12 L603.54,279.69 L605.55,281.13 L608.07,280.71 L610.58,279.12 L613.09,278.79 L615.60,278.12 L617.61,276.24 L619.62,275.10 L622.14,277.03 L624.65,280.13 L627.16,281.53 L629.67,282.14 L632.19,279.65 L634.70,278.72 L636.71,280.44 L638.72,283.14 L640.73,281.74 L642.74,280.13 L644.75,281.26 L646.76,281.13 L648.77,280.33 L650.78,279.12 L652.89,279.73 L655.00,281.13 L657.75,281.88 L660.50,281.13" fill="none" stroke="#1d4a7c" stroke-width="0.9"/>
<path d="M32.60,303.24 L35.03,298.22 L37.04,298.17 L39.05,298.22 L41.06,296.99 L43.07,295.20 L45.08,297.31 L47.09,298.82 L49.10,297.37 L51.11,297.21 L53.12,295.83 L55.13,296.21 L57.14,300.50 L59.15,305.25 L61.16,301.33 L63.17,298.22 L65.18,300.78 L67.19,302.24 L69.20,302.08 L71.21,301.23 L73.22,301.08 L75.23,300.67 L77.24,300.23 L79.75,299.51 L82.26,298.22 L84.27,298.25 L86.28,299.45 L88.29,300.23 L90.30,300.29 L92.31,302.30 L94.32,302.24 L96.83,300.94 L99.35,301.23 L101.36,300.30 L103.37,298.22 L105.38,298.46 L107.39,300.23 L109.40,299.56 L111.41,298.22 L114.42,288.17 L116.43,294.91 L118.44,302.24 L120.45,299.05 L122.46,296.21 L124.47,297.83 L126.48,298.22 L128.49,298.35 L130.50,300.23 L132.51,298.93 L134.52,299.22 L137.04,301.98 L139.55,303.24 L141.56,300.74 L143.57,298.22 L146.08,298.48 L148.59,300.23 L150.60,301.61 L152.61,301.23 L155.13,303.54 L157.64,304.25 L159.65,300.53 L161.66,298.22 L163.67,300.09 L165.68,302.24 L168.19,299.57 L170.70,298.22 L172.71,299.39 L174.72,301.23 L176.73,300.44 L178.74,299.22 L180.75,298.11 L182.76,298.22 L184.77,301.08 L186.78,303.24 L188.02,298.22 L190.03,298.41 L192.04,300.23 L194.05,297.12 L196.06,295.20 L198.07,297.28 L200.08,298.22 L202.09,299.04 L204.10,300.23 L206.11,301.09 L208.12,302.24 L210.13,302.91 L212.14,303.24 L214.15,301.69 L216.16,300.23 L218.17,301.53 L220.18,303.24 L222.19,300.39 L224.20,299.22 L226.21,300.13 L228.22,300.23 L230.23,300.57 L232.24,299.22 L234.25,303.09 L236.26,305.25 L238.27,304.04 L240.28,302.24 L242.29,302.48 L244.30,303.24 L246.81,304.50 L249.32,306.26 L251.33,301.57 L253.34,296.21 L255.35,300.04 L257.36,303.24 L259.87,304.05 L262.39,306.26 L264.40,303.77 L266.41,302.24 L268.92,298.98 L271.43,296.21 L273.44,298.74 L275.45,301.23 L278.47,297.21 L281.48,301.23 L283.49,299.78 L285.50,297.21 L287.51,297.71 L289.52,298.22 L292.04,298.37 L294.55,300.23 L296.56,300.30 L298.57,299.22 L300.58,299.60 L302.59,300.23 L304.60,299.26 L306.61,298.22 L308.62,299.22 L310.63,301.23 L313.14,298.59 L315.65,296.21 L317.66,298.01 L319.67,300.23 L321.68,298.71 L323.69,296.21 L325.70,297.50 L327.71,300.23 L329.72,302.83 L331.73,305.25 L333.74,303.16 L335.75,302.24 L337.76,302.09 L339.77,301.23 L341.90,298.89 L344.02,298.22 L346.53,298.32 L349.05,299.22 L351.56,298.74 L354.07,298.82 L356.58,298.46 L359.10,297.61 L361.61,297.81 L364.12,299.62 L366.63,299.85 L369.15,300.23 L372.16,296.21 L374.67,297.39 L377.19,299.62 L379.70,298.02 L382.21,297.21 L384.22,298.68 L386.23,300.23 L388.24,299.75 L390.25,297.61 L392.76,297.88 L395.28,298.22 L397.79,300.34 L400.30,300.83 L402.31,299.43 L404.32,299.22 L406.83,298.98 L409.35,297.21 L411.36,295.76 L413.37,294.80 L415.88,294.44 L418.39,295.20 L420.40,297.16 L422.41,298.22 L424.42,300.47 L426.43,301.23 L428.44,298.67 L430.45,297.46 L432.46,296.21 L434.97,297.70 L437.49,298.22 L440.00,297.43 L442.51,297.21 L444.52,296.24 L446.53,296.21 L448.54,297.33 L450.55,300.23 L453.07,298.39 L455.58,298.22 L458.09,296.92 L460.60,295.20 L462.61,299.29 L464.62,301.63 L467.64,303.24 L469.65,300.62 L471.66,296.21 L474.67,300.23 L476.68,302.54 L478.69,304.85 L481.21,301.18 L483.72,299.22 L485.73,300.41 L487.74,302.24 L489.75,303.26 L491.76,303.24 L493.77,303.34 L495.78,302.24 L497.90,300.98 L500.03,299.22 L502.04,300.74 L504.05,303.24 L506.06,301.28 L508.07,299.22 L510.08,301.19 L512.09,303.24 L515.10,302.24 L517.11,300.96 L519.12,299.22 L521.13,302.31 L523.14,306.26 L525.15,303.04 L527.16,298.22 L530.18,305.25 L533.19,311.28 L536.21,314.30 L538.22,314.00 L540.23,312.29 L542.24,310.67 L544.25,310.28 L547.26,303.24 L550.28,295.20 L553.29,290.18 L555.30,290.30 L557.31,291.18 L559.32,291.72 L561.33,290.51 L563.34,290.78 L565.35,291.78 L567.36,291.18 L569.37,293.22 L571.38,295.20 L573.39,298.37 L575.40,300.83 L577.91,297.38 L580.43,293.19 L582.44,295.69 L584.45,299.22 L586.46,300.84 L588.47,303.24 L590.48,301.29 L592.49,300.23 L595.00,300.05 L597.51,299.22 L599.52,301.08 L601.53,302.24 L603.54,302.08 L605.55,303.24 L608.07,301.93 L610.58,299.22 L613.09,298.58 L615.60,298.22 L617.61,297.75 L619.62,298.22 L622.14,299.10 L624.65,300.23 L627.16,302.09 L629.67,302.24 L632.19,300.33 L634.70,298.22 L636.71,300.95 L638.72,303.24 L640.73,302.49 L642.74,300.23 L644.75,302.06 L646.76,302.24 L648.77,301.70 L650.78,300.23 L652.89,300.78 L655.00,301.63 L657.75,301.79 L660.50,301.63" fill="none" stroke="#3274c2" stroke-width="0.9"/>
<path d="M32.60,323.34 L35.03,320.33 L37.37,319.27 L39.72,319.28 L42.06,318.32 L44.57,319.62 L47.09,320.33 L49.10,320.58 L51.11,319.72 L53.12,319.52 L55.13,320.33 L57.14,321.91 L59.15,324.35 L61.16,321.77 L63.17,320.33 L65.68,320.89 L68.19,322.34 L70.20,323.72 L72.21,324.35 L74.72,322.75 L77.24,322.34 L79.75,321.38 L82.26,320.33 L84.27,320.20 L86.28,320.67 L88.29,321.33 L90.30,321.89 L92.31,323.21 L94.32,323.34 L96.83,322.51 L99.35,321.33 L101.36,319.55 L103.37,319.32 L105.38,319.97 L107.39,321.33 L109.73,318.76 L112.08,317.91 L114.42,315.30 L116.43,319.31 L118.44,322.34 L120.95,320.31 L123.47,317.31 L125.98,319.84 L128.49,321.33 L130.50,321.39 L132.51,321.38 L134.52,320.33 L137.04,322.30 L139.55,323.34 L141.56,321.44 L143.57,320.33 L146.08,321.39 L148.59,321.33 L150.60,321.81 L152.61,322.34 L155.13,324.25 L157.64,325.35 L159.65,322.94 L161.66,320.33 L163.67,321.72 L165.68,323.34 L168.19,321.62 L170.70,320.33 L172.71,321.72 L174.72,323.34 L176.73,322.04 L178.74,321.33 L180.75,320.22 L182.76,320.33 L184.77,322.35 L186.78,323.34 L188.02,319.32 L190.03,321.31 L192.04,322.34 L194.05,321.41 L196.06,318.92 L198.07,320.43 L200.08,321.33 L202.09,322.42 L204.10,323.34 L206.11,323.94 L208.12,323.74 L210.13,323.46 L212.14,324.35 L214.15,322.62 L216.16,320.33 L218.17,321.24 L220.18,322.34 L222.19,321.32 L224.20,321.33 L226.21,320.86 L228.22,321.33 L230.23,321.87 L232.24,322.34 L234.25,323.45 L236.26,325.35 L238.27,323.28 L240.28,321.33 L242.29,322.51 L244.30,323.34 L246.81,323.68 L249.32,324.35 L251.33,320.74 L253.34,318.32 L255.35,320.81 L257.36,323.34 L259.87,324.12 L262.39,325.75 L264.40,324.12 L266.41,323.34 L268.92,320.84 L271.43,319.32 L273.44,320.11 L275.45,321.33 L278.47,318.92 L281.48,321.33 L283.49,319.64 L285.50,319.32 L287.51,320.07 L289.52,320.33 L292.04,321.56 L294.55,321.33 L296.56,321.16 L298.57,321.33 L300.58,321.18 L302.59,320.33 L304.60,322.02 L306.61,322.34 L308.62,321.10 L310.63,321.33 L313.14,319.25 L315.65,318.32 L317.66,320.82 L319.67,322.34 L321.68,321.37 L323.69,319.32 L325.70,320.55 L327.71,321.33 L329.72,322.80 L331.73,325.35 L333.74,324.21 L335.75,323.34 L337.76,323.93 L339.77,323.34 L341.90,322.95 L344.02,321.33 L346.53,321.31 L349.05,320.33 L351.56,319.85 L354.07,320.33 L356.58,320.39 L359.10,319.32 L361.61,319.93 L364.12,320.93 L366.63,320.97 L369.15,320.33 L372.16,319.32 L374.67,319.24 L377.19,320.33 L379.70,320.58 L382.21,319.32 L384.22,320.99 L386.23,322.34 L388.24,321.69 L390.25,320.33 L392.76,320.37 L395.28,321.33 L397.79,322.02 L400.30,322.34 L402.31,321.46 L404.32,320.33 L406.83,319.97 L409.35,319.32 L411.36,318.09 L413.37,317.31 L415.88,318.48 L418.39,318.92 L420.40,318.87 L422.41,319.32 L424.42,320.50 L426.43,322.34 L428.44,320.79 L430.45,320.62 L432.46,319.32 L434.97,319.20 L437.49,320.33 L440.00,320.39 L442.51,321.33 L444.52,319.64 L446.53,319.32 L448.54,321.06 L450.55,322.34 L453.07,321.42 L455.58,320.33 L458.09,319.69 L460.60,318.92 L462.61,319.89 L464.62,322.34 L467.64,323.34 L469.65,321.03 L471.66,318.92 L474.67,321.33 L476.68,322.59 L478.69,324.35 L481.21,323.19 L483.72,323.34 L485.73,322.04 L487.74,322.34 L489.75,323.13 L491.76,322.34 L493.77,322.23 L495.78,323.34 L497.90,321.52 L500.03,320.33 L502.04,320.96 L504.05,322.34 L506.06,321.79 L508.07,320.93 L510.08,321.46 L512.09,323.34 L515.10,322.34 L517.11,321.28 L519.12,320.33 L521.13,323.13 L523.14,326.36 L525.15,323.37 L527.16,319.32 L530.18,325.35 L533.19,329.37 L536.21,331.38 L538.22,329.08 L540.23,328.37 L542.24,329.11 L544.25,330.38 L547.26,324.35 L550.28,318.32 L553.29,315.30 L555.30,314.79 L557.31,314.30 L559.32,315.25 L561.33,314.73 L563.34,314.90 L565.35,314.56 L567.36,314.30 L569.37,316.08 L571.38,317.31 L573.39,318.49 L575.40,320.33 L577.91,318.57 L580.43,318.32 L582.44,319.32 L584.45,320.33 L586.46,322.99 L588.47,324.35 L590.48,323.72 L592.49,322.34 L595.00,322.45 L597.51,323.34 L599.52,323.13 L601.53,322.34 L603.54,323.40 L605.55,323.34 L608.07,322.45 L610.58,322.34 L613.09,321.97 L615.60,321.33 L617.61,320.10 L619.62,319.32 L622.14,320.42 L624.65,322.34 L627.16,323.00 L629.67,324.35 L632.19,321.86 L634.70,320.33 L636.71,322.10 L638.72,324.35 L640.73,322.10 L642.74,321.33 L644.75,322.17 L646.76,323.34 L648.77,321.17 L650.78,320.33 L652.89,322.05 L655.00,322.94 L657.75,323.10 L660.50,322.94" fill="none" stroke="#5a8fc4" stroke-width="0.9"/>
<path d="M32.60,343.44 L35.03,341.43 L37.04,340.96 L39.05,341.43 L41.06,341.17 L43.07,340.43 L45.08,341.92 L47.09,343.04 L49.10,342.97 L51.11,341.83 L53.12,341.56 L55.13,341.83 L58.14,343.84 L60.15,342.55 L62.16,341.83 L64.67,341.41 L67.19,340.43 L70.20,343.04 L72.71,343.43 L75.23,343.44 L77.74,342.70 L80.25,342.44 L82.26,342.66 L84.27,342.44 L86.28,342.51 L88.29,342.84 L90.30,343.47 L92.31,343.44 L94.82,342.48 L97.34,342.44 L99.35,341.10 L101.36,340.43 L103.37,341.91 L105.38,342.44 L107.39,341.76 L109.40,341.43 L111.41,340.14 L113.42,339.42 L115.93,341.50 L118.44,342.84 L120.45,342.09 L122.46,341.03 L124.97,341.61 L127.49,343.04 L129.50,342.80 L131.51,342.44 L133.52,343.14 L135.53,343.44 L138.04,343.04 L140.55,343.44 L143.07,342.62 L145.58,341.43 L147.59,341.98 L149.60,343.44 L151.61,342.74 L153.62,342.44 L155.63,342.94 L157.64,344.45 L159.65,343.09 L161.66,342.44 L163.67,343.51 L165.68,343.44 L168.19,342.82 L170.70,342.44 L172.71,343.33 L174.72,343.04 L177.24,342.16 L179.75,341.43 L182.26,342.57 L184.77,343.44 L188.02,342.44 L190.03,342.58 L192.04,341.83 L194.05,342.86 L196.06,343.44 L198.07,342.78 L200.08,343.04 L202.09,343.35 L204.10,343.44 L206.11,344.11 L208.12,344.45 L210.13,344.57 L212.14,345.45 L214.15,343.66 L216.16,342.84 L218.17,343.59 L220.18,343.44 L222.19,343.26 L224.20,343.04 L226.21,342.87 L228.22,343.44 L230.23,343.18 L232.24,343.04 L234.25,343.71 L236.26,345.05 L238.27,344.60 L240.28,343.44 L242.29,343.95 L244.30,344.45 L246.81,343.47 L249.32,343.44 L251.33,342.82 L253.34,341.43 L255.35,341.94 L257.36,343.44 L259.87,344.18 L262.39,345.45 L264.40,343.88 L266.41,343.44 L268.92,342.73 L271.43,341.43 L273.44,341.47 L275.45,342.44 L278.47,341.03 L281.48,343.04 L283.49,342.77 L285.50,342.44 L287.51,342.45 L289.52,343.44 L292.04,342.92 L294.55,342.44 L296.56,342.96 L298.57,343.04 L300.58,342.28 L302.59,341.43 L304.60,342.38 L306.61,343.44 L308.62,342.92 L310.63,342.44 L313.14,341.86 L315.65,341.43 L317.66,342.55 L319.67,343.44 L321.68,342.15 L323.69,341.83 L325.70,342.61 L327.71,343.44 L329.72,343.63 L331.73,344.45 L333.74,345.19 L335.75,345.05 L337.76,344.77 L339.77,343.44 L341.90,342.42 L344.02,342.44 L346.53,341.71 L349.05,341.83 L351.56,341.88 L354.07,341.43 L356.58,342.02 L359.10,342.44 L361.61,341.36 L364.12,341.43 L366.63,342.68 L369.15,343.44 L372.16,342.44 L374.67,341.96 L377.19,340.43 L379.70,341.04 L382.21,341.83 L384.22,342.96 L386.23,344.45 L388.24,344.03 L390.25,343.44 L392.76,343.17 L395.28,341.83 L397.79,342.35 L400.30,343.44 L402.31,342.20 L404.32,341.43 L406.83,341.06 L409.35,341.43 L411.36,341.39 L413.37,341.03 L415.88,340.69 L418.39,340.43 L420.40,340.64 L422.41,341.43 L424.42,342.10 L426.43,343.04 L428.44,342.28 L430.45,342.41 L432.46,342.44 L434.97,342.51 L437.49,341.43 L440.00,342.34 L442.51,343.04 L444.52,342.18 L446.53,341.83 L448.54,343.16 L450.55,343.44 L453.07,342.47 L455.58,341.83 L458.09,341.13 L460.60,341.03 L462.61,341.48 L464.62,343.04 L467.64,343.44 L469.65,342.52 L471.66,342.44 L474.67,343.44 L476.68,343.38 L478.69,344.05 L481.21,343.42 L483.72,343.44 L485.73,343.39 L487.74,342.44 L489.75,341.65 L491.76,341.43 L493.77,341.33 L495.78,341.83 L497.90,341.56 L500.03,341.03 L502.04,342.74 L504.05,343.44 L506.06,343.69 L508.07,344.45 L510.08,344.26 L512.09,343.44 L514.10,342.78 L516.11,342.44 L518.12,343.01 L520.13,343.44 L523.14,345.45 L526.16,341.83 L528.17,343.26 L530.18,344.45 L533.19,346.46 L536.21,348.47 L538.22,347.99 L540.23,346.46 L542.24,347.07 L544.25,347.06 L546.26,344.26 L548.27,341.43 L550.28,340.84 L552.29,339.42 L554.80,338.76 L557.31,338.42 L559.32,338.95 L561.33,340.31 L563.34,340.43 L565.35,338.97 L567.36,337.41 L569.37,339.75 L571.38,341.43 L573.39,342.21 L575.40,343.44 L577.91,343.14 L580.43,341.83 L582.44,342.27 L584.45,342.44 L586.46,343.14 L588.47,344.45 L590.48,344.47 L592.49,343.44 L595.00,342.90 L597.51,342.44 L599.52,342.75 L601.53,343.44 L603.54,343.16 L605.55,343.44 L608.07,342.46 L610.58,342.44 L613.09,341.37 L615.60,341.03 L617.61,341.96 L619.62,342.44 L622.14,342.51 L624.65,343.44 L627.16,342.95 L629.67,343.04 L632.19,343.38 L634.70,343.84 L636.71,343.70 L638.72,343.44 L640.73,343.10 L642.74,343.04 L644.75,343.58 L646.76,343.44 L648.77,342.65 L650.78,342.44 L652.89,342.58 L655.00,343.04 L657.75,342.95 L660.50,343.04" fill="none" stroke="#b3cfe6" stroke-width="0.9"/>
<rect x="21.6" y="387.4" width="8.4" height="2.6" rx="1.3" fill="#c0dcf4"/>
<text x="38.20" y="391.30" font-size="7.6" fill="#ccccdc" stroke="#ccccdc" stroke-width="0.28" text-anchor="start" font-weight="normal" >web_server_01</text>
<rect x="100.3" y="387.4" width="8.4" height="2.6" rx="1.3" fill="#5a9bd8"/>
<text x="116.90" y="391.30" font-size="7.6" fill="#ccccdc" stroke="#ccccdc" stroke-width="0.28" text-anchor="start" font-weight="normal" >web_server_02</text>
<rect x="180" y="387.4" width="8.4" height="2.6" rx="1.3" fill="#2f7bd0"/>
<text x="196.60" y="391.30" font-size="7.6" fill="#ccccdc" stroke="#ccccdc" stroke-width="0.28" text-anchor="start" font-weight="normal" >web_server_03</text>
<rect x="259.7" y="387.4" width="8.4" height="2.6" rx="1.3" fill="#1b4f8f"/>
<text x="276.30" y="391.30" font-size="7.6" fill="#ccccdc" stroke="#ccccdc" stroke-width="0.28" text-anchor="start" font-weight="normal" >web_server_04</text>
<rect x="683.00" y="220.10" width="331.50" height="180.40" rx="2" fill="#181b1f" stroke="rgba(204,204,220,0.06)" stroke-width="1"/>
<text x="688.30" y="234.20" font-size="9" fill="#ccccdc" stroke="#ccccdc" stroke-width="0.28" text-anchor="start" font-weight="normal" >Google hits</text>
<rect x="688.30" y="261.8" width="59.0" height="120.2" fill="#24252b"/>
<rect x="688.30" y="381.00" width="59.0" height="1.00" fill="#2f4b77"/>
<rect x="688.30" y="381.00" width="59.0" height="1.3" fill="#5794f2"/>
<text x="717.80" y="258.60" font-size="16" fill="#5794f2" stroke="#5794f2" stroke-width="0.3" text-anchor="middle" font-weight="normal" >0.400</text>
<text x="717.80" y="392.00" font-size="8.9" fill="#ccccdc" stroke="#ccccdc" stroke-width="0.28" text-anchor="middle" font-weight="normal" >A-series</text>
<rect x="753.70" y="261.8" width="59.0" height="120.2" fill="#24252b"/>
<rect x="753.70" y="348.30" width="59.0" height="33.70" fill="#2f4b77"/>
<rect x="753.70" y="348.30" width="59.0" height="1.3" fill="#5794f2"/>
<text x="783.20" y="258.60" font-size="16" fill="#5794f2" stroke="#5794f2" stroke-width="0.3" text-anchor="middle" font-weight="normal" >27.7</text>
<text x="783.20" y="392.00" font-size="8.9" fill="#ccccdc" stroke="#ccccdc" stroke-width="0.28" text-anchor="middle" font-weight="normal" >B-series</text>
<rect x="818.90" y="261.8" width="59.0" height="120.2" fill="#24252b"/>
<rect x="818.90" y="337.00" width="59.0" height="45.00" fill="#2f4b77"/>
<rect x="818.90" y="337.00" width="59.0" height="1.3" fill="#5794f2"/>
<text x="848.40" y="258.60" font-size="16" fill="#5794f2" stroke="#5794f2" stroke-width="0.3" text-anchor="middle" font-weight="normal" >37.1</text>
<text x="848.40" y="392.00" font-size="8.9" fill="#ccccdc" stroke="#ccccdc" stroke-width="0.28" text-anchor="middle" font-weight="normal" >C-series</text>
<rect x="884.30" y="261.8" width="59.0" height="120.2" fill="#24252b"/>
<rect x="884.30" y="300.80" width="59.0" height="81.20" fill="#523c63"/>
<rect x="884.30" y="300.80" width="59.0" height="1.3" fill="#b877d9"/>
<text x="913.80" y="258.60" font-size="16" fill="#b877d9" stroke="#b877d9" stroke-width="0.3" text-anchor="middle" font-weight="normal" >66.5</text>
<text x="913.80" y="392.00" font-size="8.9" fill="#ccccdc" stroke="#ccccdc" stroke-width="0.28" text-anchor="middle" font-weight="normal" >D-series</text>
<rect x="949.70" y="261.8" width="59.0" height="120.2" fill="#24252b"/>
<rect x="949.70" y="356.20" width="59.0" height="25.80" fill="#2f4b77"/>
<rect x="949.70" y="356.20" width="59.0" height="1.3" fill="#5794f2"/>
<text x="979.20" y="258.60" font-size="16" fill="#5794f2" stroke="#5794f2" stroke-width="0.3" text-anchor="middle" font-weight="normal" >21.2</text>
<text x="979.20" y="392.00" font-size="8.9" fill="#ccccdc" stroke="#ccccdc" stroke-width="0.28" text-anchor="middle" font-weight="normal" >E-series</text>
<rect x="10.00" y="405.80" width="1004.50" height="156.10" rx="2" fill="#181b1f" stroke="rgba(204,204,220,0.06)" stroke-width="1"/>
<text x="512.00" y="419.40" font-size="9" fill="#ccccdc" stroke="#ccccdc" stroke-width="0.28" text-anchor="middle" font-weight="normal" >client side full page load</text>
<line x1="38.75" y1="436.90" x2="903.75" y2="436.90" stroke="rgba(204,204,220,0.12)" stroke-width="1"/>
<text x="32.30" y="439.20" font-size="7.2" fill="#ccccdc" stroke="#ccccdc" stroke-width="0.28" text-anchor="end" font-weight="normal" >5 s</text>
<line x1="38.75" y1="458.02" x2="903.75" y2="458.02" stroke="rgba(204,204,220,0.12)" stroke-width="1"/>
<text x="32.30" y="460.32" font-size="7.2" fill="#ccccdc" stroke="#ccccdc" stroke-width="0.28" text-anchor="end" font-weight="normal" >4 s</text>
<line x1="38.75" y1="479.14" x2="903.75" y2="479.14" stroke="rgba(204,204,220,0.12)" stroke-width="1"/>
<text x="32.30" y="481.44" font-size="7.2" fill="#ccccdc" stroke="#ccccdc" stroke-width="0.28" text-anchor="end" font-weight="normal" >3 s</text>
<line x1="38.75" y1="500.26" x2="903.75" y2="500.26" stroke="rgba(204,204,220,0.12)" stroke-width="1"/>
<text x="32.30" y="502.56" font-size="7.2" fill="#ccccdc" stroke="#ccccdc" stroke-width="0.28" text-anchor="end" font-weight="normal" >2 s</text>
<line x1="38.75" y1="521.38" x2="903.75" y2="521.38" stroke="rgba(204,204,220,0.12)" stroke-width="1"/>
<text x="32.30" y="523.68" font-size="7.2" fill="#ccccdc" stroke="#ccccdc" stroke-width="0.28" text-anchor="end" font-weight="normal" >1 s</text>
<line x1="38.75" y1="542.50" x2="903.75" y2="542.50" stroke="rgba(204,204,220,0.12)" stroke-width="1"/>
<text x="32.30" y="544.80" font-size="7.2" fill="#ccccdc" stroke="#ccccdc" stroke-width="0.28" text-anchor="end" font-weight="normal" >0 ms</text>
<line x1="39.30" y1="436.9" x2="39.30" y2="542.5" stroke="rgba(204,204,220,0.12)" stroke-width="1"/>
<text x="39.30" y="553.90" font-size="7.2" fill="#ccccdc" stroke="#ccccdc" stroke-width="0.28" text-anchor="middle" font-weight="normal" >16:50</text>
<line x1="111.60" y1="436.9" x2="111.60" y2="542.5" stroke="rgba(204,204,220,0.12)" stroke-width="1"/>
<text x="111.60" y="553.90" font-size="7.2" fill="#ccccdc" stroke="#ccccdc" stroke-width="0.28" text-anchor="middle" font-weight="normal" >16:55</text>
<line x1="183.90" y1="436.9" x2="183.90" y2="542.5" stroke="rgba(204,204,220,0.12)" stroke-width="1"/>
<text x="183.90" y="553.90" font-size="7.2" fill="#ccccdc" stroke="#ccccdc" stroke-width="0.28" text-anchor="middle" font-weight="normal" >17:00</text>
<line x1="256.20" y1="436.9" x2="256.20" y2="542.5" stroke="rgba(204,204,220,0.12)" stroke-width="1"/>
<text x="256.20" y="553.90" font-size="7.2" fill="#ccccdc" stroke="#ccccdc" stroke-width="0.28" text-anchor="middle" font-weight="normal" >17:05</text>
<line x1="328.50" y1="436.9" x2="328.50" y2="542.5" stroke="rgba(204,204,220,0.12)" stroke-width="1"/>
<text x="328.50" y="553.90" font-size="7.2" fill="#ccccdc" stroke="#ccccdc" stroke-width="0.28" text-anchor="middle" font-weight="normal" >17:10</text>
<line x1="400.80" y1="436.9" x2="400.80" y2="542.5" stroke="rgba(204,204,220,0.12)" stroke-width="1"/>
<text x="400.80" y="553.90" font-size="7.2" fill="#ccccdc" stroke="#ccccdc" stroke-width="0.28" text-anchor="middle" font-weight="normal" >17:15</text>
<line x1="473.10" y1="436.9" x2="473.10" y2="542.5" stroke="rgba(204,204,220,0.12)" stroke-width="1"/>
<text x="473.10" y="553.90" font-size="7.2" fill="#ccccdc" stroke="#ccccdc" stroke-width="0.28" text-anchor="middle" font-weight="normal" >17:20</text>
<line x1="545.40" y1="436.9" x2="545.40" y2="542.5" stroke="rgba(204,204,220,0.12)" stroke-width="1"/>
<text x="545.40" y="553.90" font-size="7.2" fill="#ccccdc" stroke="#ccccdc" stroke-width="0.28" text-anchor="middle" font-weight="normal" >17:25</text>
<line x1="617.70" y1="436.9" x2="617.70" y2="542.5" stroke="rgba(204,204,220,0.12)" stroke-width="1"/>
<text x="617.70" y="553.90" font-size="7.2" fill="#ccccdc" stroke="#ccccdc" stroke-width="0.28" text-anchor="middle" font-weight="normal" >17:30</text>
<line x1="690.00" y1="436.9" x2="690.00" y2="542.5" stroke="rgba(204,204,220,0.12)" stroke-width="1"/>
<text x="690.00" y="553.90" font-size="7.2" fill="#ccccdc" stroke="#ccccdc" stroke-width="0.28" text-anchor="middle" font-weight="normal" >17:35</text>
<line x1="762.30" y1="436.9" x2="762.30" y2="542.5" stroke="rgba(204,204,220,0.12)" stroke-width="1"/>
<text x="762.30" y="553.90" font-size="7.2" fill="#ccccdc" stroke="#ccccdc" stroke-width="0.28" text-anchor="middle" font-weight="normal" >17:40</text>
<line x1="834.60" y1="436.9" x2="834.60" y2="542.5" stroke="rgba(204,204,220,0.12)" stroke-width="1"/>
<text x="834.60" y="553.90" font-size="7.2" fill="#ccccdc" stroke="#ccccdc" stroke-width="0.28" text-anchor="middle" font-weight="normal" >17:45</text>
<rect x="35.90" y="471.25" width="13.20" height="71.25" fill="#e04d40"/>
<rect x="35.90" y="507.20" width="13.20" height="35.30" fill="#ee853b"/>
<rect x="35.90" y="529.40" width="13.20" height="13.10" fill="#e7b63b"/>
<rect x="35.90" y="540.30" width="13.20" height="2.20" fill="#f1d48e"/>
<rect x="68.40" y="497.50" width="38.50" height="45.00" fill="#e04d40"/>
<rect x="68.40" y="516.90" width="38.50" height="25.60" fill="#ee853b"/>
<rect x="68.40" y="533.10" width="38.50" height="9.40" fill="#e7b63b"/>
<rect x="68.40" y="541.90" width="38.50" height="0.60" fill="#f1d48e"/>
<rect x="126.30" y="475.90" width="38.40" height="66.60" fill="#e04d40"/>
<rect x="126.30" y="507.20" width="38.40" height="35.30" fill="#ee853b"/>
<rect x="126.30" y="528.40" width="38.40" height="14.10" fill="#e7b63b"/>
<rect x="126.30" y="540.30" width="38.40" height="2.20" fill="#f1d48e"/>
<rect x="184.10" y="476.90" width="38.40" height="65.60" fill="#e04d40"/>
<rect x="184.10" y="508.10" width="38.40" height="34.40" fill="#ee853b"/>
<rect x="184.10" y="529.40" width="38.40" height="13.10" fill="#e7b63b"/>
<rect x="184.10" y="540.30" width="38.40" height="2.20" fill="#f1d48e"/>
<rect x="241.60" y="482.50" width="38.70" height="60.00" fill="#e04d40"/>
<rect x="241.60" y="510.60" width="38.70" height="31.90" fill="#ee853b"/>
<rect x="241.60" y="530.90" width="38.70" height="11.60" fill="#e7b63b"/>
<rect x="241.60" y="540.60" width="38.70" height="1.90" fill="#f1d48e"/>
<rect x="299.70" y="484.70" width="38.10" height="57.80" fill="#e04d40"/>
<rect x="299.70" y="509.10" width="38.10" height="33.40" fill="#ee853b"/>
<rect x="299.70" y="529.40" width="38.10" height="13.10" fill="#e7b63b"/>
<rect x="299.70" y="540.30" width="38.10" height="2.20" fill="#f1d48e"/>
<rect x="357.50" y="484.70" width="38.40" height="57.80" fill="#e04d40"/>
<rect x="357.50" y="512.80" width="38.40" height="29.70" fill="#ee853b"/>
<rect x="357.50" y="530.00" width="38.40" height="12.50" fill="#e7b63b"/>
<rect x="357.50" y="540.00" width="38.40" height="2.50" fill="#f1d48e"/>
<rect x="415.30" y="476.25" width="38.45" height="66.25" fill="#e04d40"/>
<rect x="415.30" y="505.60" width="38.45" height="36.90" fill="#ee853b"/>
<rect x="415.30" y="527.80" width="38.45" height="14.70" fill="#e7b63b"/>
<rect x="415.30" y="539.40" width="38.45" height="3.10" fill="#f1d48e"/>
<rect x="473.10" y="458.75" width="38.50" height="83.75" fill="#e04d40"/>
<rect x="473.10" y="497.80" width="38.50" height="44.70" fill="#ee853b"/>
<rect x="473.10" y="526.25" width="38.50" height="16.25" fill="#e7b63b"/>
<rect x="473.10" y="538.75" width="38.50" height="3.75" fill="#f1d48e"/>
<rect x="530.90" y="480.90" width="38.50" height="61.60" fill="#e04d40"/>
<rect x="530.90" y="508.10" width="38.50" height="34.40" fill="#ee853b"/>
<rect x="530.90" y="527.80" width="38.50" height="14.70" fill="#e7b63b"/>
<rect x="530.90" y="539.40" width="38.50" height="3.10" fill="#f1d48e"/>
<rect x="588.75" y="458.75" width="38.45" height="83.75" fill="#e04d40"/>
<rect x="588.75" y="496.25" width="38.45" height="46.25" fill="#ee853b"/>
<rect x="588.75" y="523.75" width="38.45" height="18.75" fill="#e7b63b"/>
<rect x="588.75" y="536.90" width="38.45" height="5.60" fill="#f1d48e"/>
<rect x="646.60" y="475.30" width="38.40" height="67.20" fill="#e04d40"/>
<rect x="646.60" y="506.60" width="38.40" height="35.90" fill="#ee853b"/>
<rect x="646.60" y="530.00" width="38.40" height="12.50" fill="#e7b63b"/>
<rect x="646.60" y="540.00" width="38.40" height="2.50" fill="#f1d48e"/>
<rect x="704.40" y="461.25" width="38.40" height="81.25" fill="#e04d40"/>
<rect x="704.40" y="501.25" width="38.40" height="41.25" fill="#ee853b"/>
<rect x="704.40" y="526.90" width="38.40" height="15.60" fill="#e7b63b"/>
<rect x="704.40" y="538.40" width="38.40" height="4.10" fill="#f1d48e"/>
<rect x="762.20" y="472.50" width="38.40" height="70.00" fill="#e04d40"/>
<rect x="762.20" y="501.25" width="38.40" height="41.25" fill="#ee853b"/>
<rect x="762.20" y="524.40" width="38.40" height="18.10" fill="#e7b63b"/>
<rect x="762.20" y="537.80" width="38.40" height="4.70" fill="#f1d48e"/>
<rect x="820.00" y="459.70" width="38.40" height="82.80" fill="#e04d40"/>
<rect x="820.00" y="496.60" width="38.40" height="45.90" fill="#ee853b"/>
<rect x="820.00" y="521.60" width="38.40" height="20.90" fill="#e7b63b"/>
<rect x="820.00" y="537.20" width="38.40" height="5.30" fill="#f1d48e"/>
<rect x="877.80" y="482.50" width="25.95" height="60.00" fill="#e04d40"/>
<rect x="877.80" y="511.25" width="25.95" height="31.25" fill="#ee853b"/>
<rect x="877.80" y="532.50" width="25.95" height="10.00" fill="#e7b63b"/>
<rect x="877.80" y="541.50" width="25.95" height="1.00" fill="#f1d48e"/>
<text x="999.60" y="442.60" font-size="7.6" fill="#3d9ee6" stroke="#3d9ee6" stroke-width="0.28" text-anchor="end" font-weight="normal" >avg</text>
<rect x="918.5" y="452.60" width="8.2" height="2.6" rx="1.3" fill="#f5e6d2"/>
<text x="932.90" y="456.70" font-size="7.6" fill="#ccccdc" stroke="#ccccdc" stroke-width="0.28" text-anchor="start" font-weight="normal" >upper_25</text>
<text x="1004.60" y="456.70" font-size="7.6" fill="#ccccdc" stroke="#ccccdc" stroke-width="0.28" text-anchor="end" font-weight="normal" >6.81 ms</text>
<rect x="917.1" y="462.05" width="89" height="16.3" fill="rgba(204,204,220,0.05)"/>
<rect x="918.5" y="468.95" width="8.2" height="2.6" rx="1.3" fill="#f2c96d"/>
<text x="932.90" y="473.05" font-size="7.6" fill="#ccccdc" stroke="#ccccdc" stroke-width="0.28" text-anchor="start" font-weight="normal" >upper_50</text>
<text x="1004.60" y="473.05" font-size="7.6" fill="#ccccdc" stroke="#ccccdc" stroke-width="0.28" text-anchor="end" font-weight="normal" >142 ms</text>
<rect x="918.5" y="485.30" width="8.2" height="2.6" rx="1.3" fill="#eab839"/>
<text x="932.90" y="489.40" font-size="7.6" fill="#ccccdc" stroke="#ccccdc" stroke-width="0.28" text-anchor="start" font-weight="normal" >upper_75</text>
<text x="1004.60" y="489.40" font-size="7.6" fill="#ccccdc" stroke="#ccccdc" stroke-width="0.28" text-anchor="end" font-weight="normal" >535 ms</text>
<rect x="917.1" y="494.75" width="89" height="16.3" fill="rgba(204,204,220,0.05)"/>
<rect x="918.5" y="501.65" width="8.2" height="2.6" rx="1.3" fill="#ef843c"/>
<text x="932.90" y="505.75" font-size="7.6" fill="#ccccdc" stroke="#ccccdc" stroke-width="0.28" text-anchor="start" font-weight="normal" >upper_90</text>
<text x="1004.60" y="505.75" font-size="7.6" fill="#ccccdc" stroke="#ccccdc" stroke-width="0.28" text-anchor="end" font-weight="normal" >1.04 s</text>
<rect x="918.5" y="518.00" width="8.2" height="2.6" rx="1.3" fill="#e24d42"/>
<text x="932.90" y="522.10" font-size="7.6" fill="#ccccdc" stroke="#ccccdc" stroke-width="0.28" text-anchor="start" font-weight="normal" >upper_95</text>
<text x="1004.60" y="522.10" font-size="7.6" fill="#ccccdc" stroke="#ccccdc" stroke-width="0.28" text-anchor="end" font-weight="normal" >1.46 s</text>
</svg>
</body></html>
